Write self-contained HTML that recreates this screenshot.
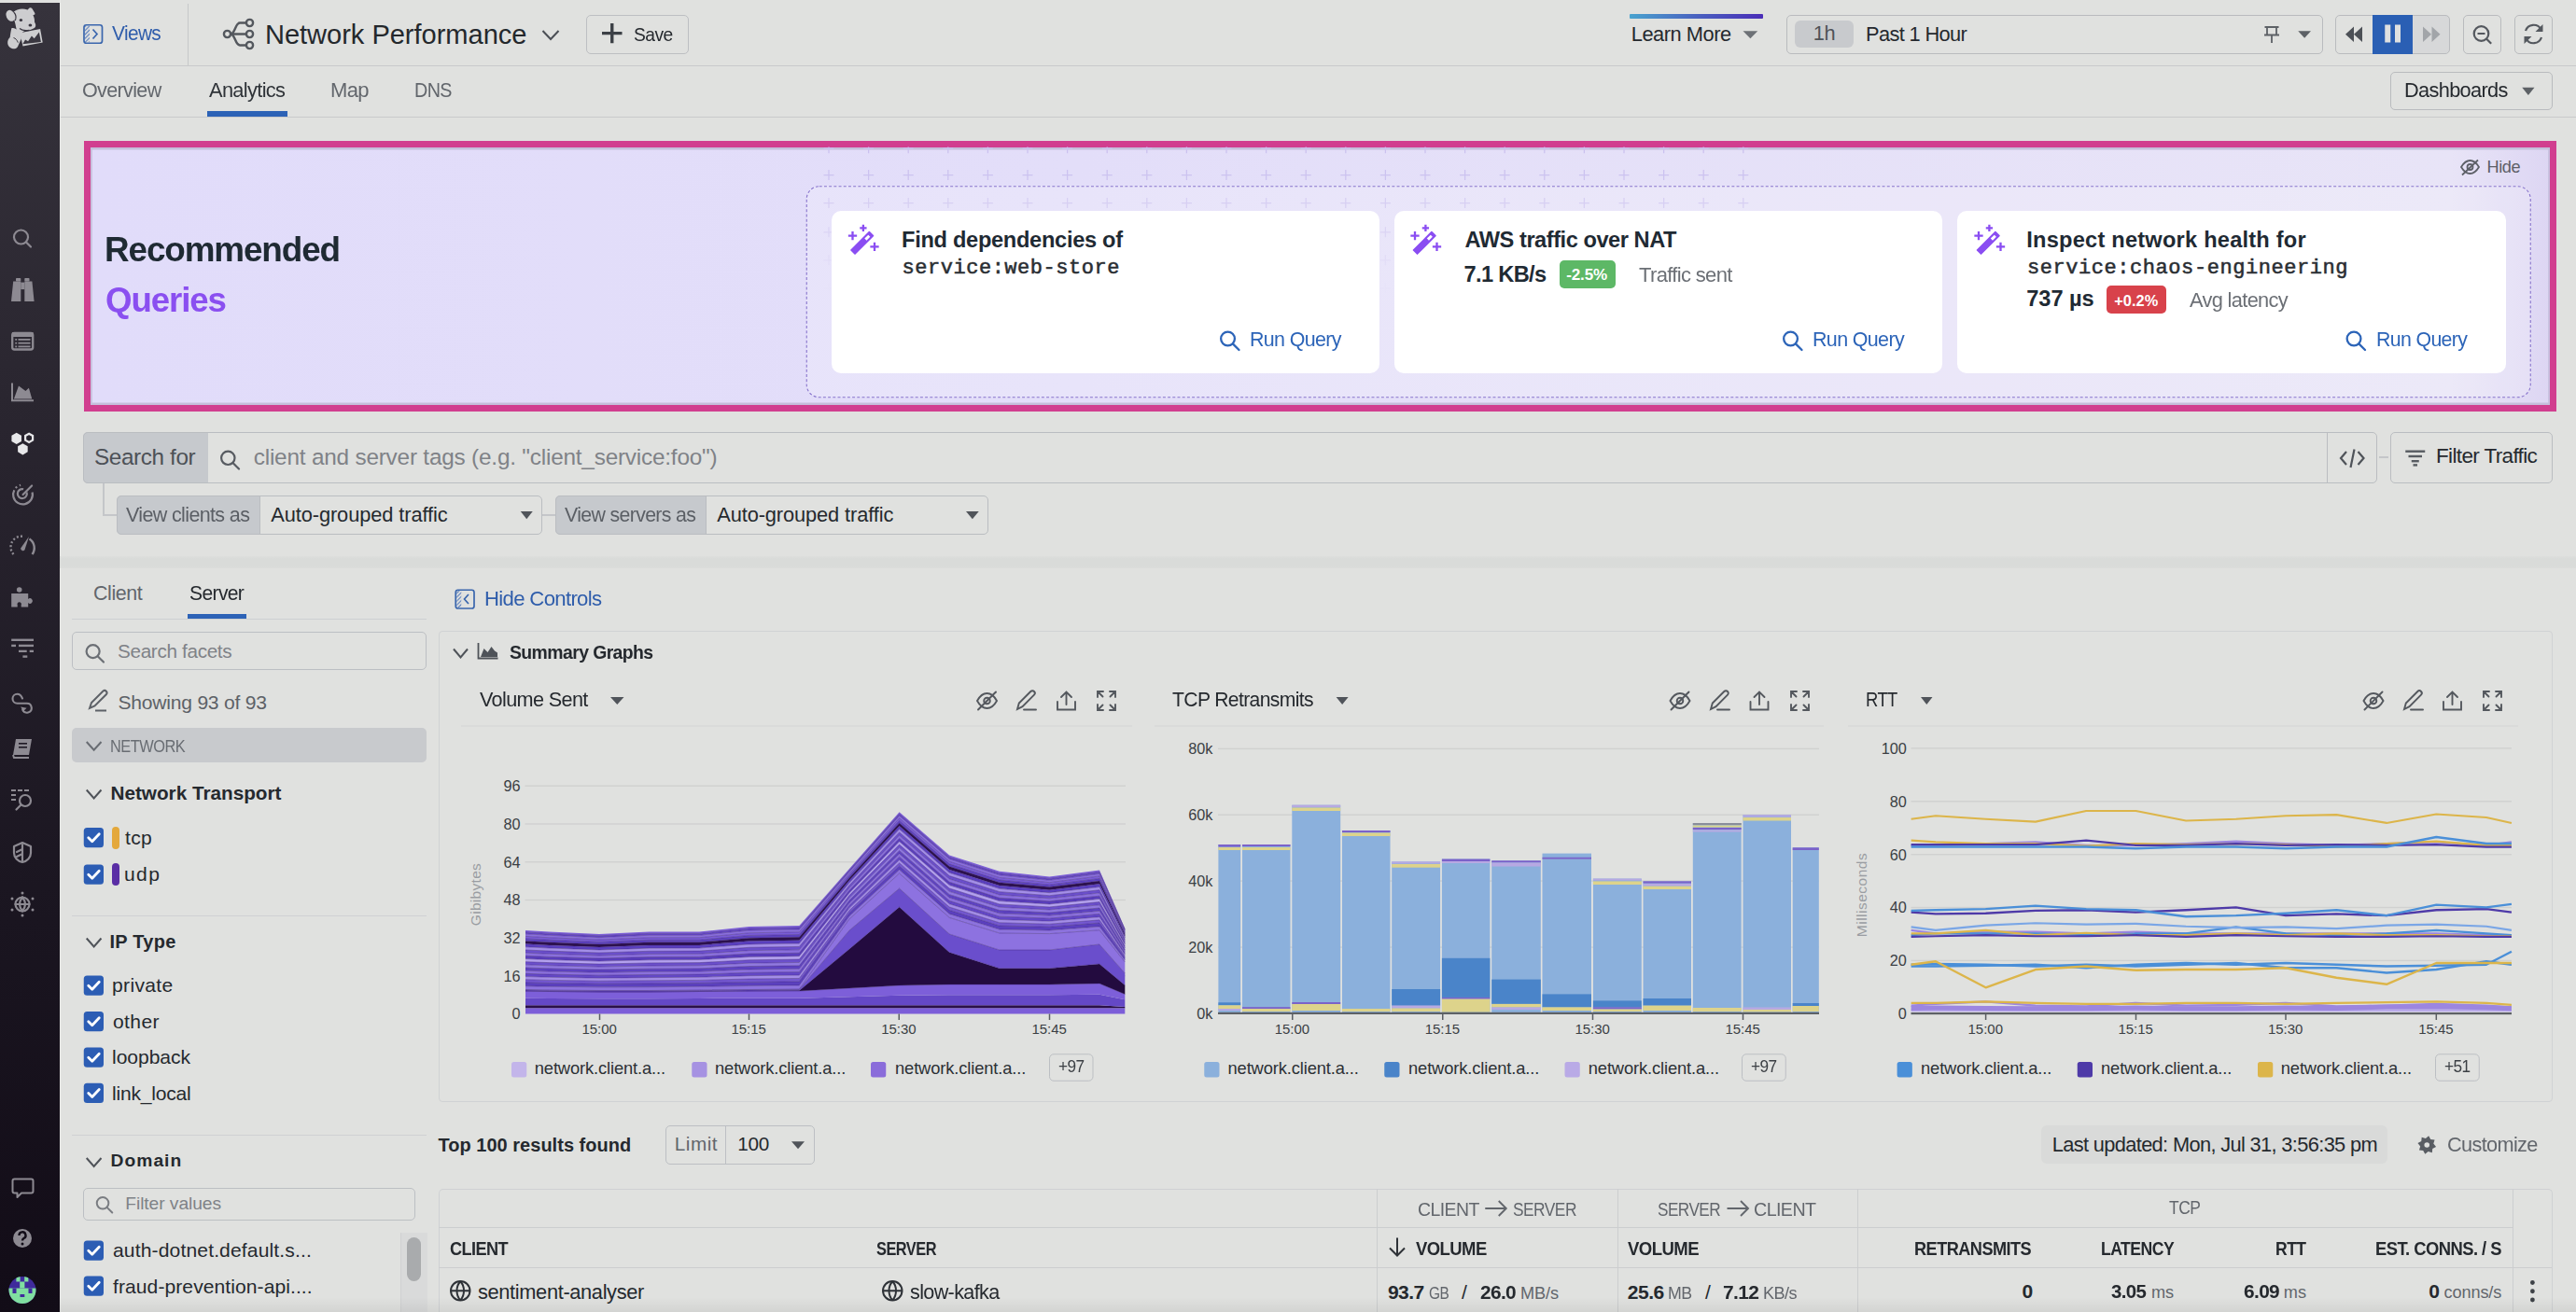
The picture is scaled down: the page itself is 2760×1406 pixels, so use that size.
<!DOCTYPE html><html><head><meta charset="utf-8"><style>
html,body{margin:0;padding:0}body{width:2760px;height:1406px;position:relative;overflow:hidden;background:#e0e1df;font-family:"Liberation Sans",sans-serif}
.t{position:absolute;white-space:pre}svg{position:absolute;overflow:visible}
</style></head><body>
<div style="position:absolute;left:0.00px;top:3.00px;width:64.00px;height:1403.00px;background:linear-gradient(#36333c,#2a2630 30%,#1a1520 70%,#120c17)"></div>
<div style="position:absolute;left:64.00px;top:0.00px;width:1.00px;height:1406.00px;background:#e9eae8"></div>
<svg style="left:0;top:0" width="64" height="1406" viewBox="0 0 64 1406"><g fill="#cdcdcf"><ellipse cx="11.3" cy="16.8" rx="4.6" ry="6.2" transform="rotate(-25 11.3 16.8)"/><path d="M14.5 13c3-3.5 10-4.5 15-2.5l1.8-1.8c1-.8 2.2-.6 3 .3l3 5c.5 1-.2 2-1.2 2l-.7.2c1.2 2.2 1.8 5 1.6 7.3l.9 2c.8 1.8.2 3.8-1.5 4.8-2 1.2-4.5 2-7 2.2-2 .2-3.5.5-4.5 1.5l-3 2.5c-1.5.5-3 0-3.5-1.5-.8-3.5-1.6-8-2.8-12.5-.6-3.2-.5-6.5-.1-9.5z"/><path d="M12.5 30c3 0 8 2 9.5 5l1 6-4 9c-1 1.8-3 2.5-5 2.2-3-.5-5.5-2.8-5.8-6-.2-2.5.8-4.6 2.5-6.2.5-3.2.8-6.5 1.8-10z"/><path d="M21.3 35.2l21.8-4.3 2.6 14.6-21.2 4.1z"/></g><path d="M24.3 47.2l2.8-4.8 3 1.8 3.8-5.6 2.8 2.6 5.2-6.6 2 10.4z" fill="#3a3740"/><path d="M15.2 13.5c1.8 2 2.2 5.5 1.2 8.5" fill="none" stroke="#3a3740" stroke-width="1.2"/><path d="M21 30.5c2.5 2.2 6.5 2.6 10.5 1.8" fill="none" stroke="#3a3740" stroke-width="1.2"/><path d="M14.5 40.5c2 .5 4 2.5 4.8 5.2" fill="none" stroke="#3a3740" stroke-width="1"/><ellipse cx="22.4" cy="21.4" rx="1.7" ry="1.5" fill="#3a3740"/><ellipse cx="32.4" cy="27" rx="1.9" ry="1.5" fill="#3a3740"/><g fill="none" stroke="#8d8a92" stroke-width="2.2" stroke-linecap="round" stroke-linejoin="round"><circle cx="22.5" cy="254" r="7.5"/><path d="M28 259.5l5 5"/></g><g fill="#8d8a92"><rect x="17" y="298" width="5.3" height="3.6" rx="0.8"/><rect x="26.3" y="298" width="5.2" height="3.6" rx="0.8"/><path d="M14.2 301.4h8.1v21.6h-10.3z"/><path d="M26.3 301.4h8.1l2.2 21.6h-10.3z"/><rect x="22.3" y="302.6" width="4" height="7.5"/></g><rect x="13.2" y="356.9" width="22" height="17.6" rx="2.2" fill="none" stroke="#8d8a92" stroke-width="2.3"/><g fill="#8d8a92"><rect x="13" y="356" width="22.5" height="5"/><rect x="16.3" y="363" width="1.8" height="1.8"/><rect x="19.5" y="363" width="13" height="1.8"/><rect x="16.3" y="366.8" width="1.8" height="1.8"/><rect x="19.5" y="366.8" width="13" height="1.8"/><rect x="16.3" y="370.5" width="1.8" height="1.8"/><rect x="19.5" y="370.5" width="13" height="1.8"/></g><path d="M14.9 427.5L20 413.4l7.4 5.7 3.5-3.4 3.4 11.8z" fill="#8d8a92"/><path d="M13 410.6v18.6h23" fill="none" stroke="#8d8a92" stroke-width="2"/><polygon points="22.98,472.95 17.70,476.00 12.42,472.95 12.42,466.85 17.70,463.80 22.98,466.85" fill="#e8e8ea"/><polygon points="35.08,471.60 31.10,473.90 27.12,471.60 27.12,467.00 31.10,464.70 35.08,467.00" fill="none" stroke="#e8e8ea" stroke-width="2.2"/><polygon points="29.68,484.35 24.40,487.40 19.12,484.35 19.12,478.25 24.40,475.20 29.68,478.25" fill="#e8e8ea"/><g fill="none" stroke="#8d8a92" stroke-width="2.2"><path d="M34.6 527.5a10.4 10.4 0 1 1-12.5-7.6" stroke-dasharray="40 2.5 2 3 2 3"/><path d="M28.6 527.5a5 5 0 1 1-3.5-3.3"/><path d="M24.6 530l9.5-9.5" stroke-linecap="round"/></g><g fill="none" stroke="#8d8a92" stroke-width="2.4"><path d="M14.5 594a11.5 11.5 0 0 1 9.5-19.2" stroke-dasharray="2 2.2"/><path d="M31.5 577.5a11.5 11.5 0 0 1 3 16.5"/></g><path d="M22.2 587.5l8.8-12.6-4.5 14.3a2.4 2.4 0 0 1-4.3-1.7z" fill="#8d8a92"/><path fill="#8d8a92" fill-rule="evenodd" d="M12.2 635.9h18v6a2.8 2.8 0 1 1 0 4.2v4.4h-7.5v-2.2a2.2 2.2 0 1 0-4 0v2.2h-6.5z"/><circle cx="20.7" cy="632" r="2.8" fill="#8d8a92"/><g fill="#8d8a92"><rect x="12.2" y="684.6" width="23.8" height="2.4"/><rect x="12.2" y="690.7" width="4.8" height="2.4"/><rect x="20" y="690.7" width="16" height="2.4"/><rect x="20" y="696.7" width="8.7" height="2.3"/><rect x="31.7" y="696.7" width="4.3" height="2.3"/><rect x="24.4" y="702.4" width="4.9" height="2.4"/></g><g fill="none" stroke="#8d8a92" stroke-width="2.1" stroke-linecap="round"><path d="M24 748.5c-1-2.5-3-4.8-5.5-4.8a5 5 0 0 0 0 10h10.3a5 5 0 1 1-4.6 7"/></g><path d="M22.2 757.5l2.6 4.8 3.8-3.5z" fill="#8d8a92"/><g fill="#8d8a92"><path d="M17 792h17l-3 17h-17z"/></g><path d="M14 809l1 3h16" fill="none" stroke="#8d8a92" stroke-width="2"/><g fill="#1e1a24"><rect x="20" y="796" width="9" height="1.6"/><rect x="20" y="800" width="9" height="1.6"/></g><g fill="#8d8a92"><rect x="12" y="846" width="5" height="2"/><rect x="19" y="846" width="5" height="2"/><rect x="26" y="846" width="5" height="2"/><rect x="12" y="851" width="5" height="2"/><rect x="12" y="856" width="5" height="2"/></g><g fill="none" stroke="#8d8a92" stroke-width="2.2" stroke-linecap="round" stroke-linejoin="round"><circle cx="27" cy="858" r="6"/><path d="M22.5 862.5l-5 5"/></g><g fill="none" stroke="#8d8a92" stroke-width="2.2" stroke-linecap="round" stroke-linejoin="round"><path d="M24 903l9 4v7c0 5-4 9-9 10-5-1-9-5-9-10v-7z"/><path d="M24 905v18M24 910l-6 3M24 915l-6 3"/></g><g fill="none" stroke="#8d8a92" stroke-width="2.2" stroke-linecap="round" stroke-linejoin="round" stroke-width="1.8"><circle cx="24" cy="969" r="7.5"/><path d="M16.5 969h15M24 961.5c-4 5-4 10 0 15M24 961.5c4 5 4 10 0 15"/></g><g fill="#8d8a92"><circle cx="24" cy="957" r="1.5"/><circle cx="24" cy="981" r="1.5"/><circle cx="13" cy="963" r="1.5"/><circle cx="35" cy="963" r="1.5"/><circle cx="13" cy="975" r="1.5"/><circle cx="35" cy="975" r="1.5"/></g><path d="M15.5 1263.5h18a2 2 0 0 1 2 2v11a2 2 0 0 1-2 2h-10.5l-4.5 4.5v-4.5h-3a2 2 0 0 1-2-2v-11a2 2 0 0 1 2-2z" fill="none" stroke="#8d8a92" stroke-width="2" stroke-linejoin="round"/><circle cx="24" cy="1327" r="10" fill="#8d8a92"/><path d="M20.5 1324a3.5 3.5 0 1 1 5 3c-1 .6-1.5 1.2-1.5 2.5" fill="none" stroke="#120d18" stroke-width="2.4"/><circle cx="24" cy="1333" r="1.5" fill="#120d18"/><circle cx="24" cy="1382.5" r="14.5" fill="#3f2b9c"/><clipPath id="av"><circle cx="24" cy="1382.5" r="14.5"/></clipPath><g clip-path="url(#av)" fill="#80dfa0"><rect x="17.4" y="1368" width="4.2" height="5.5"/><rect x="26.2" y="1368" width="4.2" height="5.5"/><rect x="21.2" y="1373.5" width="5.2" height="7"/><rect x="9" y="1380.5" width="30" height="18"/></g><rect x="13.5" y="1380.5" width="4" height="5.5" fill="#3f2b9c"/><rect x="30.5" y="1380.5" width="4" height="5.5" fill="#3f2b9c"/><rect x="21.5" y="1387" width="4.8" height="3" fill="#3f2b9c"/></svg>
<div style="position:absolute;left:65.00px;top:70.00px;width:2695.00px;height:1.00px;background:#c9cacb"></div>
<div style="position:absolute;left:200.75px;top:4.00px;width:1.50px;height:66.00px;background:#c6c8c9"></div>
<div style="position:absolute;left:65.00px;top:125.00px;width:2695.00px;height:1.00px;background:#c9cacb"></div>
<div style="position:absolute;left:222.00px;top:119.00px;width:85.75px;height:5.50px;background:#2c62b6"></div>
<div style="position:absolute;left:627.75px;top:15.50px;width:110.25px;height:42.00px;border:1px solid #bdbfc2;border-radius:5px;box-sizing:border-box"></div>
<div style="position:absolute;left:1746.25px;top:15.00px;width:143.00px;height:4.50px;background:linear-gradient(90deg,#49a3cf,#4a62c0 50%,#4a2db8);border-radius:1px"></div>
<div style="position:absolute;left:1914.25px;top:15.50px;width:574.25px;height:42.00px;border:1px solid #b9bbbe;border-radius:5px;box-sizing:border-box"></div>
<div style="position:absolute;left:1922.50px;top:21.75px;width:63.00px;height:29.00px;background:#c8cacd;border-radius:6px"></div>
<div style="position:absolute;left:2584.75px;top:16.00px;width:40.50px;height:41.00px;background:#d7d8d9;border-radius:0 5px 5px 0"></div>
<div style="position:absolute;left:2501.50px;top:15.50px;width:123.75px;height:42.00px;border:1px solid #b9bbbe;border-radius:5px;box-sizing:border-box"></div>
<div style="position:absolute;left:2542.25px;top:15.50px;width:42.50px;height:42.00px;background:#2a5fb4"></div>
<div style="position:absolute;left:2638.50px;top:15.50px;width:41.75px;height:42.00px;border:1px solid #b9bbbe;border-radius:5px;box-sizing:border-box"></div>
<div style="position:absolute;left:2693.50px;top:15.50px;width:41.25px;height:42.00px;border:1px solid #b9bbbe;border-radius:5px;box-sizing:border-box"></div>
<div style="position:absolute;left:2560.50px;top:76.75px;width:174.25px;height:41.50px;border:1px solid #b9bbbe;border-radius:5px;box-sizing:border-box"></div>
<svg style="left:0;top:0" width="2760" height="1406" viewBox="0 0 2760 1406"><rect x="90" y="26.75" width="19.5" height="19.5" rx="2.5" fill="none" stroke="#3a66ad" stroke-width="1.7"/><defs><pattern id="hatch" width="3" height="3" patternUnits="userSpaceOnUse" patternTransform="rotate(45)"><rect width="1.1" height="3" fill="#5b7fbd"/></pattern></defs><rect x="91" y="27.75" width="5" height="17.5" fill="url(#hatch)"/><path d="M99.5 31.5l4.5 5-4.5 5" fill="none" stroke="#3a66ad" stroke-width="1.7"/><g fill="none" stroke="#54585e" stroke-width="2.4"><circle cx="243.5" cy="36.5" r="3.6"/><circle cx="267.5" cy="24.5" r="3.6"/><circle cx="267.5" cy="36.5" r="3.6"/><circle cx="267.5" cy="48.5" r="3.6"/><path d="M247 36.5h17M247 36.5c5 0 5-12 10-12h7M247 36.5c5 0 5 12 10 12h7"/></g><path d="M581.5 33l8.5 9 8.5-9" fill="none" stroke="#4b4f55" stroke-width="2"/><path d="M655.75 25v21.25M645 35.6h21.5" stroke="#3c4046" stroke-width="3.4"/><path d="M1867.5 33.25H1883.25L1875.375 41.25z" fill="#6d7176"/><g fill="none" stroke="#5d6166" stroke-width="1.8"><path d="M2426.5 29h15M2429 29v8M2439 29v8M2426 37.5h16M2434 37.5v8.5"/></g><path d="M2462.25 33.25H2476L2469.125 40.75z" fill="#5d6166"/><path d="M2522 28.5v16.5l-9-8.25zM2531 28.5v16.5l-9-8.25z" fill="#4c5056"/><rect x="2555.25" y="26.5" width="6" height="19" fill="#dfe0e0"/><rect x="2566" y="26.5" width="6" height="19" fill="#dfe0e0"/><path d="M2596 28.5v16.5l9-8.25zM2605.5 28.5v16.5l9-8.25z" fill="#a2a5a9"/><g fill="none" stroke="#54585e" stroke-width="2.2"><circle cx="2658.5" cy="36" r="7.8"/><path d="M2664.2 41.8l5 5M2654.5 36h8"/></g><g fill="none" stroke="#54585e" stroke-width="2.2"><path d="M2706 33a9 9 0 0 1 16.5-1.5"/><path d="M2723 40a9 9 0 0 1-16.5 1.5"/></g><path d="M2724.5 26v8h-8z" fill="#54585e"/><path d="M2704.5 47v-8h8z" fill="#54585e"/><path d="M2702.25 93.75H2715.5L2708.875 102z" fill="#5d6166"/></svg>
<div style="position:absolute;left:89.75px;top:150.75px;width:2648.75px;height:290.00px;background:#d13e8f"></div>
<div style="position:absolute;left:96.50px;top:157.50px;width:2635.50px;height:276.50px;background:linear-gradient(90deg,#e1dcfa 0%,#e3def9 40%,#e8e4f7 96%,#ddd6f3 100%);box-shadow:inset 0 2.5px 0 #c5bedb,inset 0 -2.5px 0 #c5bedb,inset 2px 0 0 #c9c2e0,inset -2px 0 0 #c9c2e0"></div>
<svg style="left:0;top:0" width="2760" height="1406" viewBox="0 0 2760 1406"><defs><linearGradient id="pgv" x1="0" x2="0" y1="0" y2="1"><stop offset="0" stop-color="#fff"/><stop offset="0.45" stop-color="#fff" stop-opacity="0.9"/><stop offset="0.85" stop-color="#fff" stop-opacity="0.15"/><stop offset="1" stop-color="#fff" stop-opacity="0"/></linearGradient><mask id="pgm"><rect x="840" y="157.5" width="1060" height="160" fill="url(#pgv)"/></mask></defs><g mask="url(#pgm)" stroke="#cbc1ef" stroke-width="1.25"><path d="M882.5 158.75h11M888.0 153.25v11"/><path d="M882.5 187.5h11M888.0 182.0v11"/><path d="M882.5 217.5h11M888.0 212.0v11"/><path d="M882.5 248.75h11M888.0 243.25v11"/><path d="M882.5 278.75h11M888.0 273.25v11"/><path d="M882.5 308.75h11M888.0 303.25v11"/><path d="M925.1 158.75h11M930.6 153.25v11"/><path d="M925.1 187.5h11M930.6 182.0v11"/><path d="M925.1 217.5h11M930.6 212.0v11"/><path d="M925.1 248.75h11M930.6 243.25v11"/><path d="M925.1 278.75h11M930.6 273.25v11"/><path d="M925.1 308.75h11M930.6 303.25v11"/><path d="M967.7 158.75h11M973.2 153.25v11"/><path d="M967.7 187.5h11M973.2 182.0v11"/><path d="M967.7 217.5h11M973.2 212.0v11"/><path d="M967.7 248.75h11M973.2 243.25v11"/><path d="M967.7 278.75h11M973.2 273.25v11"/><path d="M967.7 308.75h11M973.2 303.25v11"/><path d="M1010.3 158.75h11M1015.8 153.25v11"/><path d="M1010.3 187.5h11M1015.8 182.0v11"/><path d="M1010.3 217.5h11M1015.8 212.0v11"/><path d="M1010.3 248.75h11M1015.8 243.25v11"/><path d="M1010.3 278.75h11M1015.8 273.25v11"/><path d="M1010.3 308.75h11M1015.8 303.25v11"/><path d="M1052.9 158.75h11M1058.4 153.25v11"/><path d="M1052.9 187.5h11M1058.4 182.0v11"/><path d="M1052.9 217.5h11M1058.4 212.0v11"/><path d="M1052.9 248.75h11M1058.4 243.25v11"/><path d="M1052.9 278.75h11M1058.4 273.25v11"/><path d="M1052.9 308.75h11M1058.4 303.25v11"/><path d="M1095.5 158.75h11M1101.0 153.25v11"/><path d="M1095.5 187.5h11M1101.0 182.0v11"/><path d="M1095.5 217.5h11M1101.0 212.0v11"/><path d="M1095.5 248.75h11M1101.0 243.25v11"/><path d="M1095.5 278.75h11M1101.0 273.25v11"/><path d="M1095.5 308.75h11M1101.0 303.25v11"/><path d="M1138.1 158.75h11M1143.6 153.25v11"/><path d="M1138.1 187.5h11M1143.6 182.0v11"/><path d="M1138.1 217.5h11M1143.6 212.0v11"/><path d="M1138.1 248.75h11M1143.6 243.25v11"/><path d="M1138.1 278.75h11M1143.6 273.25v11"/><path d="M1138.1 308.75h11M1143.6 303.25v11"/><path d="M1180.7 158.75h11M1186.2 153.25v11"/><path d="M1180.7 187.5h11M1186.2 182.0v11"/><path d="M1180.7 217.5h11M1186.2 212.0v11"/><path d="M1180.7 248.75h11M1186.2 243.25v11"/><path d="M1180.7 278.75h11M1186.2 273.25v11"/><path d="M1180.7 308.75h11M1186.2 303.25v11"/><path d="M1223.3 158.75h11M1228.8 153.25v11"/><path d="M1223.3 187.5h11M1228.8 182.0v11"/><path d="M1223.3 217.5h11M1228.8 212.0v11"/><path d="M1223.3 248.75h11M1228.8 243.25v11"/><path d="M1223.3 278.75h11M1228.8 273.25v11"/><path d="M1223.3 308.75h11M1228.8 303.25v11"/><path d="M1265.9 158.75h11M1271.4 153.25v11"/><path d="M1265.9 187.5h11M1271.4 182.0v11"/><path d="M1265.9 217.5h11M1271.4 212.0v11"/><path d="M1265.9 248.75h11M1271.4 243.25v11"/><path d="M1265.9 278.75h11M1271.4 273.25v11"/><path d="M1265.9 308.75h11M1271.4 303.25v11"/><path d="M1308.5 158.75h11M1314.0 153.25v11"/><path d="M1308.5 187.5h11M1314.0 182.0v11"/><path d="M1308.5 217.5h11M1314.0 212.0v11"/><path d="M1308.5 248.75h11M1314.0 243.25v11"/><path d="M1308.5 278.75h11M1314.0 273.25v11"/><path d="M1308.5 308.75h11M1314.0 303.25v11"/><path d="M1351.1 158.75h11M1356.6 153.25v11"/><path d="M1351.1 187.5h11M1356.6 182.0v11"/><path d="M1351.1 217.5h11M1356.6 212.0v11"/><path d="M1351.1 248.75h11M1356.6 243.25v11"/><path d="M1351.1 278.75h11M1356.6 273.25v11"/><path d="M1351.1 308.75h11M1356.6 303.25v11"/><path d="M1393.7 158.75h11M1399.2 153.25v11"/><path d="M1393.7 187.5h11M1399.2 182.0v11"/><path d="M1393.7 217.5h11M1399.2 212.0v11"/><path d="M1393.7 248.75h11M1399.2 243.25v11"/><path d="M1393.7 278.75h11M1399.2 273.25v11"/><path d="M1393.7 308.75h11M1399.2 303.25v11"/><path d="M1436.3 158.75h11M1441.8 153.25v11"/><path d="M1436.3 187.5h11M1441.8 182.0v11"/><path d="M1436.3 217.5h11M1441.8 212.0v11"/><path d="M1436.3 248.75h11M1441.8 243.25v11"/><path d="M1436.3 278.75h11M1441.8 273.25v11"/><path d="M1436.3 308.75h11M1441.8 303.25v11"/><path d="M1478.9 158.75h11M1484.4 153.25v11"/><path d="M1478.9 187.5h11M1484.4 182.0v11"/><path d="M1478.9 217.5h11M1484.4 212.0v11"/><path d="M1478.9 248.75h11M1484.4 243.25v11"/><path d="M1478.9 278.75h11M1484.4 273.25v11"/><path d="M1478.9 308.75h11M1484.4 303.25v11"/><path d="M1521.5 158.75h11M1527.0 153.25v11"/><path d="M1521.5 187.5h11M1527.0 182.0v11"/><path d="M1521.5 217.5h11M1527.0 212.0v11"/><path d="M1521.5 248.75h11M1527.0 243.25v11"/><path d="M1521.5 278.75h11M1527.0 273.25v11"/><path d="M1521.5 308.75h11M1527.0 303.25v11"/><path d="M1564.1 158.75h11M1569.6 153.25v11"/><path d="M1564.1 187.5h11M1569.6 182.0v11"/><path d="M1564.1 217.5h11M1569.6 212.0v11"/><path d="M1564.1 248.75h11M1569.6 243.25v11"/><path d="M1564.1 278.75h11M1569.6 273.25v11"/><path d="M1564.1 308.75h11M1569.6 303.25v11"/><path d="M1606.7 158.75h11M1612.2 153.25v11"/><path d="M1606.7 187.5h11M1612.2 182.0v11"/><path d="M1606.7 217.5h11M1612.2 212.0v11"/><path d="M1606.7 248.75h11M1612.2 243.25v11"/><path d="M1606.7 278.75h11M1612.2 273.25v11"/><path d="M1606.7 308.75h11M1612.2 303.25v11"/><path d="M1649.3 158.75h11M1654.8 153.25v11"/><path d="M1649.3 187.5h11M1654.8 182.0v11"/><path d="M1649.3 217.5h11M1654.8 212.0v11"/><path d="M1649.3 248.75h11M1654.8 243.25v11"/><path d="M1649.3 278.75h11M1654.8 273.25v11"/><path d="M1649.3 308.75h11M1654.8 303.25v11"/><path d="M1691.9 158.75h11M1697.4 153.25v11"/><path d="M1691.9 187.5h11M1697.4 182.0v11"/><path d="M1691.9 217.5h11M1697.4 212.0v11"/><path d="M1691.9 248.75h11M1697.4 243.25v11"/><path d="M1691.9 278.75h11M1697.4 273.25v11"/><path d="M1691.9 308.75h11M1697.4 303.25v11"/><path d="M1734.5 158.75h11M1740.0 153.25v11"/><path d="M1734.5 187.5h11M1740.0 182.0v11"/><path d="M1734.5 217.5h11M1740.0 212.0v11"/><path d="M1734.5 248.75h11M1740.0 243.25v11"/><path d="M1734.5 278.75h11M1740.0 273.25v11"/><path d="M1734.5 308.75h11M1740.0 303.25v11"/><path d="M1777.1 158.75h11M1782.6 153.25v11"/><path d="M1777.1 187.5h11M1782.6 182.0v11"/><path d="M1777.1 217.5h11M1782.6 212.0v11"/><path d="M1777.1 248.75h11M1782.6 243.25v11"/><path d="M1777.1 278.75h11M1782.6 273.25v11"/><path d="M1777.1 308.75h11M1782.6 303.25v11"/><path d="M1819.7 158.75h11M1825.2 153.25v11"/><path d="M1819.7 187.5h11M1825.2 182.0v11"/><path d="M1819.7 217.5h11M1825.2 212.0v11"/><path d="M1819.7 248.75h11M1825.2 243.25v11"/><path d="M1819.7 278.75h11M1825.2 273.25v11"/><path d="M1819.7 308.75h11M1825.2 303.25v11"/><path d="M1862.3 158.75h11M1867.8 153.25v11"/><path d="M1862.3 187.5h11M1867.8 182.0v11"/><path d="M1862.3 217.5h11M1867.8 212.0v11"/><path d="M1862.3 248.75h11M1867.8 243.25v11"/><path d="M1862.3 278.75h11M1867.8 273.25v11"/><path d="M1862.3 308.75h11M1867.8 303.25v11"/></g></svg>
<div style="position:absolute;left:863.75px;top:199.25px;width:1848.00px;height:227.00px;border-radius:14px;background:rgba(255,255,255,0.2)"></div>
<svg style="left:0;top:0" width="2760" height="1406"><rect x="864.25" y="199.75" width="1847" height="226" rx="13.5" fill="none" stroke="#8773cc" stroke-width="1.1" stroke-dasharray="3 2.2"/></svg>
<div style="position:absolute;left:890.75px;top:226.25px;width:587.25px;height:173.75px;background:#fff;border-radius:10px"></div>
<div style="position:absolute;left:1493.75px;top:226.25px;width:587.50px;height:173.75px;background:#fff;border-radius:10px"></div>
<div style="position:absolute;left:2097.00px;top:226.25px;width:587.75px;height:173.75px;background:#fff;border-radius:10px"></div>
<div style="position:absolute;left:1670.50px;top:279.25px;width:60.25px;height:30.00px;background:#5db866;border-radius:5px"></div>
<div style="position:absolute;left:2256.50px;top:306.25px;width:64.50px;height:29.50px;background:#d8424b;border-radius:5px"></div>
<svg style="left:0;top:0" width="2760" height="1406" viewBox="0 0 2760 1406"><g transform="translate(909,241.25)"><g transform="translate(14.7,19.1) rotate(-45)"><rect x="-14.5" y="-3.65" width="29" height="7.3" rx="0.8" fill="#8a4df2"/><rect x="5.2" y="-1.5" width="5.6" height="3" fill="#fff"/></g><path d="M4.5 6.8v9.3M-0.15 11.45h9.3M15.9 -0.5v7.3M12.25 3.15h7.3M28 18.5v9.3M23.35 23.15h9.3" stroke="#8a4df2" stroke-width="2.3"/></g><g transform="translate(1511.5,241.25)"><g transform="translate(14.7,19.1) rotate(-45)"><rect x="-14.5" y="-3.65" width="29" height="7.3" rx="0.8" fill="#8a4df2"/><rect x="5.2" y="-1.5" width="5.6" height="3" fill="#fff"/></g><path d="M4.5 6.8v9.3M-0.15 11.45h9.3M15.9 -0.5v7.3M12.25 3.15h7.3M28 18.5v9.3M23.35 23.15h9.3" stroke="#8a4df2" stroke-width="2.3"/></g><g transform="translate(2115.5,241.25)"><g transform="translate(14.7,19.1) rotate(-45)"><rect x="-14.5" y="-3.65" width="29" height="7.3" rx="0.8" fill="#8a4df2"/><rect x="5.2" y="-1.5" width="5.6" height="3" fill="#fff"/></g><path d="M4.5 6.8v9.3M-0.15 11.45h9.3M15.9 -0.5v7.3M12.25 3.15h7.3M28 18.5v9.3M23.35 23.15h9.3" stroke="#8a4df2" stroke-width="2.3"/></g><g fill="none" stroke="#2c64b8" stroke-width="2.3"><circle cx="1315.53" cy="363.03" r="7.38"/><path d="M1320.84 368.34L1327.50 375.00" stroke-linecap="round"/></g><g fill="none" stroke="#2c64b8" stroke-width="2.3"><circle cx="1918.53" cy="363.03" r="7.38"/><path d="M1923.84 368.34L1930.50 375.00" stroke-linecap="round"/></g><g fill="none" stroke="#2c64b8" stroke-width="2.3"><circle cx="2522.03" cy="363.03" r="7.38"/><path d="M2527.34 368.34L2534.00 375.00" stroke-linecap="round"/></g><g fill="none" stroke="#5d6067" stroke-width="1.8"><path d="M2637 179c3-5 6.5-7 9.5-7s6.5 2 9.5 7c-3 5-6.5 7-9.5 7s-6.5-2-9.5-7z"/><circle cx="2646.5" cy="179" r="3"/><path d="M2638 187.5l17-16"/></g></svg>
<div style="position:absolute;left:89.00px;top:463.00px;width:133.75px;height:54.50px;background:#c6c9cd;border-radius:5px 0 0 5px"></div>
<div style="position:absolute;left:89.00px;top:463.00px;width:2458.25px;height:54.50px;border:1px solid #babdc1;border-radius:5px;box-sizing:border-box"></div>
<div style="position:absolute;left:2493.00px;top:463.00px;width:1.00px;height:54.50px;background:#babdc1"></div>
<div style="position:absolute;left:2549.25px;top:488.50px;width:9.75px;height:2.00px;background:#c4c6c9"></div>
<div style="position:absolute;left:2560.50px;top:463.00px;width:174.25px;height:54.50px;border:1px solid #babdc1;border-radius:5px;box-sizing:border-box"></div>
<div style="position:absolute;left:109.50px;top:517.50px;width:2.00px;height:35.50px;background:#c4c6c9"></div>
<div style="position:absolute;left:109.50px;top:551.00px;width:15.75px;height:2.00px;background:#c4c6c9"></div>
<div style="position:absolute;left:581.00px;top:551.00px;width:14.00px;height:2.00px;background:#c4c6c9"></div>
<div style="position:absolute;left:125.25px;top:530.75px;width:152.50px;height:42.25px;background:#c6c9cd;border-radius:5px 0 0 5px"></div>
<div style="position:absolute;left:125.25px;top:530.75px;width:455.75px;height:42.25px;border:1px solid #babdc1;border-radius:5px;box-sizing:border-box"></div>
<div style="position:absolute;left:277.75px;top:530.75px;width:1.00px;height:42.25px;background:#babdc1"></div>
<div style="position:absolute;left:595.00px;top:530.75px;width:160.50px;height:42.25px;background:#c6c9cd;border-radius:5px 0 0 5px"></div>
<div style="position:absolute;left:595.00px;top:530.75px;width:464.25px;height:42.25px;border:1px solid #babdc1;border-radius:5px;box-sizing:border-box"></div>
<div style="position:absolute;left:755.50px;top:530.75px;width:1.00px;height:42.25px;background:#babdc1"></div>
<svg style="left:0;top:0" width="2760" height="1406" viewBox="0 0 2760 1406"><g fill="none" stroke="#575b61" stroke-width="2.2"><circle cx="244.30" cy="490.80" r="7.20"/><path d="M249.48 495.98L256.00 502.50" stroke-linecap="round"/></g><g fill="none" stroke="#4f5359" stroke-width="2.2"><path d="M2514 484l-6 7 6 7M2526.5 484l6 7-6 7M2522.5 481.5l-4 19.5"/></g><g fill="#575b61"><rect x="2577.25" y="482.5" width="21" height="2.4"/><rect x="2580.5" y="487.8" width="14.5" height="2.4"/><rect x="2583.75" y="493" width="8" height="2.4"/><rect x="2585.5" y="497.2" width="4.5" height="2.4"/></g><path d="M557.75 548H570.75L564.25 556.25z" fill="#50545a"/><path d="M1035 548H1048.75L1041.875 556.25z" fill="#50545a"/></svg>
<div style="position:absolute;left:64.00px;top:596.00px;width:2696.00px;height:13.00px;background:linear-gradient(#dedfdd,#d9dbd9 20%,#d9dbd9 85%,#dcdddb)"></div>
<div style="position:absolute;left:76.50px;top:663.25px;width:380.00px;height:1.00px;background:#cdd0d2"></div>
<div style="position:absolute;left:201.00px;top:658.00px;width:63.00px;height:5.25px;background:#2c62b6"></div>
<div style="position:absolute;left:76.50px;top:677.00px;width:380.00px;height:41.25px;border:1px solid #bcbfc3;border-radius:5px;box-sizing:border-box"></div>
<div style="position:absolute;left:76.50px;top:780.00px;width:380.00px;height:37.00px;background:#c8cacd;border-radius:5px"></div>
<div style="position:absolute;left:76.50px;top:980.75px;width:380.00px;height:1.00px;background:#cfd1d3"></div>
<div style="position:absolute;left:76.50px;top:1215.75px;width:380.00px;height:1.00px;background:#cfd1d3"></div>
<svg style="left:0;top:0" width="2760" height="1406" viewBox="0 0 2760 1406"><rect x="89.75" y="887" width="21.25" height="21.25" rx="3.5" fill="#2c5db4"/><path d="M94.75 897.8l4 4 7.5-8" fill="none" stroke="#fff" stroke-width="2.8" stroke-linecap="round" stroke-linejoin="round"/></svg>
<svg style="left:0;top:0" width="2760" height="1406" viewBox="0 0 2760 1406"><rect x="89.75" y="926.5" width="21.25" height="21.25" rx="3.5" fill="#2c5db4"/><path d="M94.75 937.3l4 4 7.5-8" fill="none" stroke="#fff" stroke-width="2.8" stroke-linecap="round" stroke-linejoin="round"/></svg>
<svg style="left:0;top:0" width="2760" height="1406" viewBox="0 0 2760 1406"><rect x="89.75" y="1045.5" width="21.25" height="21.25" rx="3.5" fill="#2c5db4"/><path d="M94.75 1056.3l4 4 7.5-8" fill="none" stroke="#fff" stroke-width="2.8" stroke-linecap="round" stroke-linejoin="round"/></svg>
<svg style="left:0;top:0" width="2760" height="1406" viewBox="0 0 2760 1406"><rect x="89.75" y="1084" width="21.25" height="21.25" rx="3.5" fill="#2c5db4"/><path d="M94.75 1094.8l4 4 7.5-8" fill="none" stroke="#fff" stroke-width="2.8" stroke-linecap="round" stroke-linejoin="round"/></svg>
<svg style="left:0;top:0" width="2760" height="1406" viewBox="0 0 2760 1406"><rect x="89.75" y="1122.5" width="21.25" height="21.25" rx="3.5" fill="#2c5db4"/><path d="M94.75 1133.3l4 4 7.5-8" fill="none" stroke="#fff" stroke-width="2.8" stroke-linecap="round" stroke-linejoin="round"/></svg>
<svg style="left:0;top:0" width="2760" height="1406" viewBox="0 0 2760 1406"><rect x="89.75" y="1160.75" width="21.25" height="21.25" rx="3.5" fill="#2c5db4"/><path d="M94.75 1171.55l4 4 7.5-8" fill="none" stroke="#fff" stroke-width="2.8" stroke-linecap="round" stroke-linejoin="round"/></svg>
<svg style="left:0;top:0" width="2760" height="1406" viewBox="0 0 2760 1406"><rect x="89.75" y="1329.5" width="21.25" height="21.25" rx="3.5" fill="#2c5db4"/><path d="M94.75 1340.3l4 4 7.5-8" fill="none" stroke="#fff" stroke-width="2.8" stroke-linecap="round" stroke-linejoin="round"/></svg>
<svg style="left:0;top:0" width="2760" height="1406" viewBox="0 0 2760 1406"><rect x="89.75" y="1367.5" width="21.25" height="21.25" rx="3.5" fill="#2c5db4"/><path d="M94.75 1378.3l4 4 7.5-8" fill="none" stroke="#fff" stroke-width="2.8" stroke-linecap="round" stroke-linejoin="round"/></svg>
<div style="position:absolute;left:119.50px;top:885.50px;width:8.25px;height:24.50px;background:#e4a83b;border-radius:4px"></div>
<div style="position:absolute;left:119.50px;top:924.50px;width:8.25px;height:24.50px;background:#5a2ea5;border-radius:4px"></div>
<div style="position:absolute;left:89.00px;top:1272.50px;width:355.50px;height:35.00px;border:1px solid #bcbfc3;border-radius:5px;box-sizing:border-box"></div>
<div style="position:absolute;left:429.00px;top:1320.75px;width:27.50px;height:85.25px;background:#d9dada;border-left:1px solid #d0d1d2"></div>
<div style="position:absolute;left:436.00px;top:1326.25px;width:15.00px;height:46.25px;background:#a9abad;border-radius:8px"></div>
<svg style="left:0;top:0" width="2760" height="1406" viewBox="0 0 2760 1406"><g fill="none" stroke="#6b6f75" stroke-width="2.2"><circle cx="99.62" cy="698.12" r="7.02"/><path d="M104.67 703.17L111.00 709.50" stroke-linecap="round"/></g><g fill="none" stroke="#5d6167" stroke-width="2"><path d="M96 759l2-6 12.5-12.5a2.5 2.5 0 0 1 3.5 3.5l-12.5 12.5z"/><path d="M102 761.5h12"/></g><path d="M92.75 795L100.625 803.75L108.5 795" fill="none" stroke="#696d73" stroke-width="2"/><path d="M92.75 846.5L100.625 855.5L108.5 846.5" fill="none" stroke="#4f5359" stroke-width="2"/><path d="M92.75 1005.5L100.625 1014.5L108.5 1005.5" fill="none" stroke="#4f5359" stroke-width="2"/><path d="M92.75 1241L100.625 1250L108.5 1241" fill="none" stroke="#4f5359" stroke-width="2"/><g fill="none" stroke="#7a7d82" stroke-width="2"><circle cx="110.05" cy="1289.30" r="6.30"/><path d="M114.59 1293.84L120.25 1299.50" stroke-linecap="round"/></g></svg>
<div style="position:absolute;left:469.50px;top:676.00px;width:2265.50px;height:505.00px;border:1px solid #d0d2d4;border-radius:4px;box-sizing:border-box"></div>
<svg style="left:0;top:0" width="2760" height="1406" viewBox="0 0 2760 1406"><rect x="488.25" y="632.25" width="19.75" height="19.75" rx="2.5" fill="none" stroke="#3a66ad" stroke-width="1.7"/><rect x="489.25" y="633.25" width="5" height="17.75" fill="url(#hatch)"/><path d="M502 637l-4.5 5 4.5 5" fill="none" stroke="#3a66ad" stroke-width="1.7"/><path d="M486 695.5L493.5 704.5L501 695.5" fill="none" stroke="#4f5359" stroke-width="2"/><path d="M512.5 689v16.5h21" fill="none" stroke="#4f5359" stroke-width="1.8"/><path d="M515 704l3.5-9 4 4 4-6 3.5 4.5 3 2v4.5z" fill="#4f5359"/><path d="M654 747H668.5L661.25 755z" fill="#50545a"/><path d="M1431.6 747H1444.6L1438.1 755z" fill="#50545a"/><path d="M2058 747H2070.5L2064.25 755z" fill="#50545a"/><g fill="none" stroke="#54585e" stroke-width="1.9" stroke-linecap="round"><path d="M1047 751c3-5.5 6.5-8 10.5-8s7.5 2.5 10.5 8c-3 5.5-6.5 8-10.5 8s-7.5-2.5-10.5-8z"/><circle cx="1057.5" cy="751" r="3.3"/><path d="M1048 760.5l19-19"/><path d="M1090 760l1.8-6.5 12.5-12.5a2.6 2.6 0 0 1 3.7 3.7l-12.5 12.5z"/><path d="M1097 760.5h13"/><path d="M1142.5 755v-13M1137 747l5.5-5.5 5.5 5.5M1133 752v8.5h19v-8.5"/><path d="M1176 747v-6h6M1176 741l5.5 5.5M1195 747v-6h-6M1195 741l-5.5 5.5M1176 755v6h6M1176 761l5.5-5.5M1195 755v6h-6M1195 761l-5.5-5.5"/></g><g fill="none" stroke="#54585e" stroke-width="1.9" stroke-linecap="round"><path d="M1789.5 751c3-5.5 6.5-8 10.5-8s7.5 2.5 10.5 8c-3 5.5-6.5 8-10.5 8s-7.5-2.5-10.5-8z"/><circle cx="1800.0" cy="751" r="3.3"/><path d="M1790.5 760.5l19-19"/><path d="M1833 760l1.8-6.5 12.5-12.5a2.6 2.6 0 0 1 3.7 3.7l-12.5 12.5z"/><path d="M1840 760.5h13"/><path d="M1885.0 755v-13M1879.5 747l5.5-5.5 5.5 5.5M1875.5 752v8.5h19v-8.5"/><path d="M1919 747v-6h6M1919 741l5.5 5.5M1938 747v-6h-6M1938 741l-5.5 5.5M1919 755v6h6M1919 761l5.5-5.5M1938 755v6h-6M1938 761l-5.5-5.5"/></g><g fill="none" stroke="#54585e" stroke-width="1.9" stroke-linecap="round"><path d="M2532.5 751c3-5.5 6.5-8 10.5-8s7.5 2.5 10.5 8c-3 5.5-6.5 8-10.5 8s-7.5-2.5-10.5-8z"/><circle cx="2543.0" cy="751" r="3.3"/><path d="M2533.5 760.5l19-19"/><path d="M2576 760l1.8-6.5 12.5-12.5a2.6 2.6 0 0 1 3.7 3.7l-12.5 12.5z"/><path d="M2583 760.5h13"/><path d="M2627.5 755v-13M2622 747l5.5-5.5 5.5 5.5M2618 752v8.5h19v-8.5"/><path d="M2661 747v-6h6M2661 741l5.5 5.5M2680 747v-6h-6M2680 741l-5.5 5.5M2661 755v6h6M2661 761l5.5-5.5M2680 755v6h-6M2680 761l-5.5-5.5"/></g></svg>
<svg style="left:0;top:0" width="2760" height="1406"><rect x="562.5" y="841.50" width="643.5" height="1.4" fill="#d0d1d0"/><rect x="562.5" y="882.30" width="643.5" height="1.4" fill="#d0d1d0"/><rect x="562.5" y="923.05" width="643.5" height="1.4" fill="#d0d1d0"/><rect x="562.5" y="963.80" width="643.5" height="1.4" fill="#d0d1d0"/><rect x="562.5" y="1004.40" width="643.5" height="1.4" fill="#d0d1d0"/><rect x="562.5" y="1044.90" width="643.5" height="1.4" fill="#d0d1d0"/><polygon points="563.00,1080.30 588.40,1080.30 642.00,1080.30 695.60,1080.30 749.20,1080.30 802.80,1080.30 856.40,1080.30 910.00,1080.30 963.60,1080.30 1017.20,1080.30 1070.80,1080.30 1124.40,1080.30 1178.00,1080.30 1205.30,1080.30 1205.30,1086.50 1178.00,1086.50 1124.40,1086.50 1070.80,1086.50 1017.20,1086.50 963.60,1086.50 910.00,1086.50 856.40,1086.50 802.80,1086.50 749.20,1086.50 695.60,1086.50 642.00,1086.50 588.40,1086.50 563.00,1086.50" fill="#7c5ed8"/><polygon points="563.00,1077.30 588.40,1077.30 642.00,1077.30 695.60,1077.30 749.20,1077.30 802.80,1077.30 856.40,1077.30 910.00,1077.30 963.60,1077.30 1017.20,1077.30 1070.80,1077.30 1124.40,1077.30 1178.00,1077.30 1205.30,1079.00 1205.30,1080.30 1178.00,1080.30 1124.40,1080.30 1070.80,1080.30 1017.20,1080.30 963.60,1080.30 910.00,1080.30 856.40,1080.30 802.80,1080.30 749.20,1080.30 695.60,1080.30 642.00,1080.30 588.40,1080.30 563.00,1080.30" fill="#2a1048"/><polygon points="563.00,1069.65 588.40,1069.90 642.00,1070.15 695.60,1070.15 749.20,1069.90 802.80,1069.65 856.40,1069.65 910.00,1068.15 963.60,1066.65 1017.20,1066.15 1070.80,1066.15 1124.40,1066.15 1178.00,1065.65 1205.30,1071.35 1205.30,1079.00 1178.00,1077.30 1124.40,1077.30 1070.80,1077.30 1017.20,1077.30 963.60,1077.30 910.00,1077.30 856.40,1077.30 802.80,1077.30 749.20,1077.30 695.60,1077.30 642.00,1077.30 588.40,1077.30 563.00,1077.30" fill="#6448c6"/><polygon points="563.00,1062.00 588.40,1062.50 642.00,1063.00 695.60,1063.00 749.20,1062.50 802.80,1062.00 856.40,1062.00 910.00,1059.00 963.60,1056.00 1017.20,1055.00 1070.80,1055.00 1124.40,1055.00 1178.00,1054.00 1205.30,1065.40 1205.30,1071.35 1178.00,1065.65 1124.40,1066.15 1070.80,1066.15 1017.20,1066.15 963.60,1066.65 910.00,1068.15 856.40,1069.65 802.80,1069.65 749.20,1069.90 695.60,1070.15 642.00,1070.15 588.40,1069.90 563.00,1069.65" fill="#7d5fd9"/><polygon points="563.00,1062.00 588.40,1062.50 642.00,1063.00 695.60,1063.00 749.20,1062.50 802.80,1062.00 856.40,1061.50 910.00,1017.00 963.60,972.00 1017.20,1020.60 1070.80,1037.70 1124.40,1037.70 1178.00,1033.00 1205.30,1055.80 1205.30,1065.40 1178.00,1054.00 1124.40,1055.00 1070.80,1055.00 1017.20,1055.00 963.60,1056.00 910.00,1059.00 856.40,1062.00 802.80,1062.00 749.20,1062.50 695.60,1063.00 642.00,1063.00 588.40,1062.50 563.00,1062.00" fill="#230b3f"/><polygon points="563.00,1061.00 588.40,1061.50 642.00,1062.00 695.60,1062.00 749.20,1061.50 802.80,1061.00 856.40,1060.50 910.00,997.00 963.60,952.00 1017.20,1001.00 1070.80,1018.00 1124.40,1018.00 1178.00,1012.00 1205.30,1043.00 1205.30,1055.80 1178.00,1033.00 1124.40,1037.70 1070.80,1037.70 1017.20,1020.60 963.60,972.00 910.00,1017.00 856.40,1061.50 802.80,1062.00 749.20,1062.50 695.60,1063.00 642.00,1063.00 588.40,1062.50 563.00,1062.00" fill="#6a4ecc"/><polygon points="563.00,1060.50 588.40,1061.00 642.00,1061.50 695.60,1061.50 749.20,1061.00 802.80,1060.50 856.40,1060.00 910.00,985.00 963.60,936.00 1017.20,983.40 1070.80,1000.00 1124.40,1000.60 1178.00,996.80 1205.30,1031.00 1205.30,1043.00 1178.00,1012.00 1124.40,1018.00 1070.80,1018.00 1017.20,1001.00 963.60,952.00 910.00,997.00 856.40,1060.50 802.80,1061.00 749.20,1061.50 695.60,1062.00 642.00,1062.00 588.40,1061.50 563.00,1061.00" fill="#8d72e0"/><polygon points="563.00,997.00 588.40,998.50 642.00,1001.00 695.60,998.50 749.20,998.50 802.80,993.00 856.40,992.00 910.00,931.00 963.60,870.20 1017.20,916.50 1070.80,933.80 1124.40,939.60 1178.00,932.50 1205.30,995.00 1205.30,996.08 1178.00,934.43 1124.40,941.43 1070.80,935.79 1017.20,918.51 963.60,872.17 910.00,932.62 856.40,994.04 802.80,995.02 749.20,1000.38 695.60,1000.39 642.00,1002.82 588.40,1000.38 563.00,998.90" fill="#7c5fd7"/><polygon points="563.00,998.90 588.40,1000.38 642.00,1002.82 695.60,1000.39 749.20,1000.38 802.80,995.02 856.40,994.04 910.00,932.62 963.60,872.17 1017.20,918.51 1070.80,935.79 1124.40,941.43 1178.00,934.43 1205.30,996.08 1205.30,997.16 1178.00,936.36 1124.40,943.26 1070.80,937.77 1017.20,920.51 963.60,874.15 910.00,934.24 856.40,996.08 802.80,997.05 749.20,1002.25 695.60,1002.28 642.00,1004.63 588.40,1002.25 563.00,1000.81" fill="#6547c8"/><polygon points="563.00,1000.81 588.40,1002.25 642.00,1004.63 695.60,1002.28 749.20,1002.25 802.80,997.05 856.40,996.08 910.00,934.24 963.60,874.15 1017.20,920.51 1070.80,937.77 1124.40,943.26 1178.00,936.36 1205.30,997.16 1205.30,998.60 1178.00,938.93 1124.40,945.70 1070.80,940.42 1017.20,923.19 963.60,876.78 910.00,936.40 856.40,998.80 802.80,999.75 749.20,1004.75 695.60,1004.80 642.00,1007.05 588.40,1004.75 563.00,1003.35" fill="#8a6fdd"/><polygon points="563.00,1003.35 588.40,1004.75 642.00,1007.05 695.60,1004.80 749.20,1004.75 802.80,999.75 856.40,998.80 910.00,936.40 963.60,876.78 1017.20,923.19 1070.80,940.42 1124.40,945.70 1178.00,938.93 1205.30,998.60 1205.30,1000.04 1178.00,941.50 1124.40,948.14 1070.80,943.07 1017.20,925.87 963.60,879.41 910.00,938.56 856.40,1001.52 802.80,1002.45 749.20,1007.25 695.60,1007.32 642.00,1009.47 588.40,1007.25 563.00,1005.89" fill="#7a5dd6"/><polygon points="563.00,1005.89 588.40,1007.25 642.00,1009.47 695.60,1007.32 749.20,1007.25 802.80,1002.45 856.40,1001.52 910.00,938.56 963.60,879.41 1017.20,925.87 1070.80,943.07 1124.40,948.14 1178.00,941.50 1205.30,1000.04 1205.30,1001.48 1178.00,944.07 1124.40,950.58 1070.80,945.72 1017.20,928.54 963.60,882.04 910.00,940.72 856.40,1004.24 802.80,1005.15 749.20,1009.75 695.60,1009.84 642.00,1011.89 588.40,1009.75 563.00,1008.43" fill="#5d42c0"/><polygon points="563.00,1008.43 588.40,1009.75 642.00,1011.89 695.60,1009.84 749.20,1009.75 802.80,1005.15 856.40,1004.24 910.00,940.72 963.60,882.04 1017.20,928.54 1070.80,945.72 1124.40,950.58 1178.00,944.07 1205.30,1001.48 1205.30,1003.28 1178.00,947.29 1124.40,953.63 1070.80,949.03 1017.20,931.89 963.60,885.33 910.00,943.42 856.40,1007.64 802.80,1008.52 749.20,1012.88 695.60,1012.99 642.00,1014.91 588.40,1012.88 563.00,1011.61" fill="#2c114d"/><polygon points="563.00,1011.61 588.40,1012.88 642.00,1014.91 695.60,1012.99 749.20,1012.88 802.80,1008.52 856.40,1007.64 910.00,943.42 963.60,885.33 1017.20,931.89 1070.80,949.03 1124.40,953.63 1178.00,947.29 1205.30,1003.28 1205.30,1005.08 1178.00,950.50 1124.40,956.68 1070.80,952.34 1017.20,935.23 963.60,888.62 910.00,946.12 856.40,1011.04 802.80,1011.90 749.20,1016.00 695.60,1016.14 642.00,1017.94 588.40,1016.00 563.00,1014.78" fill="#5a3fbf"/><polygon points="563.00,1014.78 588.40,1016.00 642.00,1017.94 695.60,1016.14 749.20,1016.00 802.80,1011.90 856.40,1011.04 910.00,946.12 963.60,888.62 1017.20,935.23 1070.80,952.34 1124.40,956.68 1178.00,950.50 1205.30,1005.08 1205.30,1006.88 1178.00,953.72 1124.40,959.73 1070.80,955.65 1017.20,938.58 963.60,891.91 910.00,948.82 856.40,1014.44 802.80,1015.27 749.20,1019.12 695.60,1019.29 642.00,1020.97 588.40,1019.12 563.00,1017.96" fill="#a48fe8"/><polygon points="563.00,1017.96 588.40,1019.12 642.00,1020.97 695.60,1019.29 749.20,1019.12 802.80,1015.27 856.40,1014.44 910.00,948.82 963.60,891.91 1017.20,938.58 1070.80,955.65 1124.40,959.73 1178.00,953.72 1205.30,1006.88 1205.30,1008.68 1178.00,956.93 1124.40,962.78 1070.80,958.96 1017.20,941.92 963.60,895.20 910.00,951.52 856.40,1017.84 802.80,1018.65 749.20,1022.25 695.60,1022.44 642.00,1023.99 588.40,1022.25 563.00,1021.13" fill="#6b4fcb"/><polygon points="563.00,1021.13 588.40,1022.25 642.00,1023.99 695.60,1022.44 749.20,1022.25 802.80,1018.65 856.40,1017.84 910.00,951.52 963.60,895.20 1017.20,941.92 1070.80,958.96 1124.40,962.78 1178.00,956.93 1205.30,1008.68 1205.30,1010.48 1178.00,960.15 1124.40,965.83 1070.80,962.27 1017.20,945.27 963.60,898.49 910.00,954.22 856.40,1021.24 802.80,1022.02 749.20,1025.38 695.60,1025.59 642.00,1027.02 588.40,1025.38 563.00,1024.31" fill="#8a6fdd"/><polygon points="563.00,1024.31 588.40,1025.38 642.00,1027.02 695.60,1025.59 749.20,1025.38 802.80,1022.02 856.40,1021.24 910.00,954.22 963.60,898.49 1017.20,945.27 1070.80,962.27 1124.40,965.83 1178.00,960.15 1205.30,1010.48 1205.30,1012.28 1178.00,963.36 1124.40,968.88 1070.80,965.58 1017.20,948.61 963.60,901.78 910.00,956.92 856.40,1024.64 802.80,1025.40 749.20,1028.50 695.60,1028.74 642.00,1030.04 588.40,1028.50 563.00,1027.48" fill="#5a3ebc"/><polygon points="563.00,1027.48 588.40,1028.50 642.00,1030.04 695.60,1028.74 749.20,1028.50 802.80,1025.40 856.40,1024.64 910.00,956.92 963.60,901.78 1017.20,948.61 1070.80,965.58 1124.40,968.88 1178.00,963.36 1205.30,1012.28 1205.30,1014.08 1178.00,966.58 1124.40,971.93 1070.80,968.89 1017.20,951.96 963.60,905.07 910.00,959.62 856.40,1028.04 802.80,1028.78 749.20,1031.62 695.60,1031.89 642.00,1033.07 588.40,1031.62 563.00,1030.65" fill="#b3a1ee"/><polygon points="563.00,1030.65 588.40,1031.62 642.00,1033.07 695.60,1031.89 749.20,1031.62 802.80,1028.78 856.40,1028.04 910.00,959.62 963.60,905.07 1017.20,951.96 1070.80,968.89 1124.40,971.93 1178.00,966.58 1205.30,1014.08 1205.30,1015.88 1178.00,969.79 1124.40,974.98 1070.80,972.20 1017.20,955.30 963.60,908.36 910.00,962.32 856.40,1031.44 802.80,1032.15 749.20,1034.75 695.60,1035.04 642.00,1036.09 588.40,1034.75 563.00,1033.83" fill="#6b4fcb"/><polygon points="563.00,1033.83 588.40,1034.75 642.00,1036.09 695.60,1035.04 749.20,1034.75 802.80,1032.15 856.40,1031.44 910.00,962.32 963.60,908.36 1017.20,955.30 1070.80,972.20 1124.40,974.98 1178.00,969.79 1205.30,1015.88 1205.30,1017.68 1178.00,973.01 1124.40,978.03 1070.80,975.51 1017.20,958.65 963.60,911.65 910.00,965.02 856.40,1034.84 802.80,1035.53 749.20,1037.88 695.60,1038.19 642.00,1039.12 588.40,1037.88 563.00,1037.01" fill="#9079df"/><polygon points="563.00,1037.01 588.40,1037.88 642.00,1039.12 695.60,1038.19 749.20,1037.88 802.80,1035.53 856.40,1034.84 910.00,965.02 963.60,911.65 1017.20,958.65 1070.80,975.51 1124.40,978.03 1178.00,973.01 1205.30,1017.68 1205.30,1019.48 1178.00,976.22 1124.40,981.08 1070.80,978.82 1017.20,961.99 963.60,914.94 910.00,967.72 856.40,1038.24 802.80,1038.90 749.20,1041.00 695.60,1041.34 642.00,1042.14 588.40,1041.00 563.00,1040.18" fill="#5e43c1"/><polygon points="563.00,1040.18 588.40,1041.00 642.00,1042.14 695.60,1041.34 749.20,1041.00 802.80,1038.90 856.40,1038.24 910.00,967.72 963.60,914.94 1017.20,961.99 1070.80,978.82 1124.40,981.08 1178.00,976.22 1205.30,1019.48 1205.30,1021.28 1178.00,979.44 1124.40,984.13 1070.80,982.13 1017.20,965.34 963.60,918.23 910.00,970.42 856.40,1041.64 802.80,1042.28 749.20,1044.12 695.60,1044.49 642.00,1045.16 588.40,1044.12 563.00,1043.36" fill="#8b70dc"/><polygon points="563.00,1043.36 588.40,1044.12 642.00,1045.16 695.60,1044.49 749.20,1044.12 802.80,1042.28 856.40,1041.64 910.00,970.42 963.60,918.23 1017.20,965.34 1070.80,982.13 1124.40,984.13 1178.00,979.44 1205.30,1021.28 1205.30,1023.08 1178.00,982.65 1124.40,987.18 1070.80,985.44 1017.20,968.68 963.60,921.52 910.00,973.12 856.40,1045.04 802.80,1045.65 749.20,1047.25 695.60,1047.64 642.00,1048.19 588.40,1047.25 563.00,1046.53" fill="#6347c6"/><polygon points="563.00,1046.53 588.40,1047.25 642.00,1048.19 695.60,1047.64 749.20,1047.25 802.80,1045.65 856.40,1045.04 910.00,973.12 963.60,921.52 1017.20,968.68 1070.80,985.44 1124.40,987.18 1178.00,982.65 1205.30,1023.08 1205.30,1024.88 1178.00,985.87 1124.40,990.23 1070.80,988.75 1017.20,972.03 963.60,924.81 910.00,975.82 856.40,1048.44 802.80,1049.03 749.20,1050.38 695.60,1050.79 642.00,1051.21 588.40,1050.38 563.00,1049.70" fill="#a38de7"/><polygon points="563.00,1049.70 588.40,1050.38 642.00,1051.21 695.60,1050.79 749.20,1050.38 802.80,1049.03 856.40,1048.44 910.00,975.82 963.60,924.81 1017.20,972.03 1070.80,988.75 1124.40,990.23 1178.00,985.87 1205.30,1024.88 1205.30,1026.68 1178.00,989.08 1124.40,993.28 1070.80,992.06 1017.20,975.37 963.60,928.10 910.00,978.52 856.40,1051.84 802.80,1052.40 749.20,1053.50 695.60,1053.94 642.00,1054.24 588.40,1053.50 563.00,1052.88" fill="#7357cf"/><polygon points="563.00,1052.88 588.40,1053.50 642.00,1054.24 695.60,1053.94 749.20,1053.50 802.80,1052.40 856.40,1051.84 910.00,978.52 963.60,928.10 1017.20,975.37 1070.80,992.06 1124.40,993.28 1178.00,989.08 1205.30,1026.68 1205.30,1028.84 1178.00,992.94 1124.40,996.94 1070.80,996.03 1017.20,979.39 963.60,932.05 910.00,981.76 856.40,1055.92 802.80,1056.45 749.20,1057.25 695.60,1057.72 642.00,1057.87 588.40,1057.25 563.00,1056.69" fill="#5b40bd"/><polygon points="563.00,1056.69 588.40,1057.25 642.00,1057.87 695.60,1057.72 749.20,1057.25 802.80,1056.45 856.40,1055.92 910.00,981.76 963.60,932.05 1017.20,979.39 1070.80,996.03 1124.40,996.94 1178.00,992.94 1205.30,1028.84 1205.30,1031.00 1178.00,996.80 1124.40,1000.60 1070.80,1000.00 1017.20,983.40 963.60,936.00 910.00,985.00 856.40,1060.00 802.80,1060.50 749.20,1061.00 695.60,1061.50 642.00,1061.50 588.40,1061.00 563.00,1060.50" fill="#8d73de"/><polyline points="563.00,998.90 588.40,1000.38 642.00,1002.82 695.60,1000.39 749.20,1000.38 802.80,995.02 856.40,994.04 910.00,932.62 963.60,872.17 1017.20,918.51 1070.80,935.79 1124.40,941.43 1178.00,934.43 1205.30,996.08" fill="none" stroke="#3b1f78" stroke-opacity="0.45" stroke-width="0.9"/><polyline points="563.00,1000.81 588.40,1002.25 642.00,1004.63 695.60,1002.28 749.20,1002.25 802.80,997.05 856.40,996.08 910.00,934.24 963.60,874.15 1017.20,920.51 1070.80,937.77 1124.40,943.26 1178.00,936.36 1205.30,997.16" fill="none" stroke="#3b1f78" stroke-opacity="0.45" stroke-width="0.9"/><polyline points="563.00,1003.35 588.40,1004.75 642.00,1007.05 695.60,1004.80 749.20,1004.75 802.80,999.75 856.40,998.80 910.00,936.40 963.60,876.78 1017.20,923.19 1070.80,940.42 1124.40,945.70 1178.00,938.93 1205.30,998.60" fill="none" stroke="#3b1f78" stroke-opacity="0.45" stroke-width="0.9"/><polyline points="563.00,1005.89 588.40,1007.25 642.00,1009.47 695.60,1007.32 749.20,1007.25 802.80,1002.45 856.40,1001.52 910.00,938.56 963.60,879.41 1017.20,925.87 1070.80,943.07 1124.40,948.14 1178.00,941.50 1205.30,1000.04" fill="none" stroke="#3b1f78" stroke-opacity="0.45" stroke-width="0.9"/><polyline points="563.00,1008.43 588.40,1009.75 642.00,1011.89 695.60,1009.84 749.20,1009.75 802.80,1005.15 856.40,1004.24 910.00,940.72 963.60,882.04 1017.20,928.54 1070.80,945.72 1124.40,950.58 1178.00,944.07 1205.30,1001.48" fill="none" stroke="#3b1f78" stroke-opacity="0.45" stroke-width="0.9"/><polyline points="563.00,1011.61 588.40,1012.88 642.00,1014.91 695.60,1012.99 749.20,1012.88 802.80,1008.52 856.40,1007.64 910.00,943.42 963.60,885.33 1017.20,931.89 1070.80,949.03 1124.40,953.63 1178.00,947.29 1205.30,1003.28" fill="none" stroke="#3b1f78" stroke-opacity="0.45" stroke-width="0.9"/><polyline points="563.00,1014.78 588.40,1016.00 642.00,1017.94 695.60,1016.14 749.20,1016.00 802.80,1011.90 856.40,1011.04 910.00,946.12 963.60,888.62 1017.20,935.23 1070.80,952.34 1124.40,956.68 1178.00,950.50 1205.30,1005.08" fill="none" stroke="#3b1f78" stroke-opacity="0.45" stroke-width="0.9"/><polyline points="563.00,1017.96 588.40,1019.12 642.00,1020.97 695.60,1019.29 749.20,1019.12 802.80,1015.27 856.40,1014.44 910.00,948.82 963.60,891.91 1017.20,938.58 1070.80,955.65 1124.40,959.73 1178.00,953.72 1205.30,1006.88" fill="none" stroke="#3b1f78" stroke-opacity="0.45" stroke-width="0.9"/><polyline points="563.00,1021.13 588.40,1022.25 642.00,1023.99 695.60,1022.44 749.20,1022.25 802.80,1018.65 856.40,1017.84 910.00,951.52 963.60,895.20 1017.20,941.92 1070.80,958.96 1124.40,962.78 1178.00,956.93 1205.30,1008.68" fill="none" stroke="#3b1f78" stroke-opacity="0.45" stroke-width="0.9"/><polyline points="563.00,1024.31 588.40,1025.38 642.00,1027.02 695.60,1025.59 749.20,1025.38 802.80,1022.02 856.40,1021.24 910.00,954.22 963.60,898.49 1017.20,945.27 1070.80,962.27 1124.40,965.83 1178.00,960.15 1205.30,1010.48" fill="none" stroke="#3b1f78" stroke-opacity="0.45" stroke-width="0.9"/><polyline points="563.00,1027.48 588.40,1028.50 642.00,1030.04 695.60,1028.74 749.20,1028.50 802.80,1025.40 856.40,1024.64 910.00,956.92 963.60,901.78 1017.20,948.61 1070.80,965.58 1124.40,968.88 1178.00,963.36 1205.30,1012.28" fill="none" stroke="#3b1f78" stroke-opacity="0.45" stroke-width="0.9"/><polyline points="563.00,1030.65 588.40,1031.62 642.00,1033.07 695.60,1031.89 749.20,1031.62 802.80,1028.78 856.40,1028.04 910.00,959.62 963.60,905.07 1017.20,951.96 1070.80,968.89 1124.40,971.93 1178.00,966.58 1205.30,1014.08" fill="none" stroke="#3b1f78" stroke-opacity="0.45" stroke-width="0.9"/><polyline points="563.00,1033.83 588.40,1034.75 642.00,1036.09 695.60,1035.04 749.20,1034.75 802.80,1032.15 856.40,1031.44 910.00,962.32 963.60,908.36 1017.20,955.30 1070.80,972.20 1124.40,974.98 1178.00,969.79 1205.30,1015.88" fill="none" stroke="#3b1f78" stroke-opacity="0.45" stroke-width="0.9"/><polyline points="563.00,1037.01 588.40,1037.88 642.00,1039.12 695.60,1038.19 749.20,1037.88 802.80,1035.53 856.40,1034.84 910.00,965.02 963.60,911.65 1017.20,958.65 1070.80,975.51 1124.40,978.03 1178.00,973.01 1205.30,1017.68" fill="none" stroke="#3b1f78" stroke-opacity="0.45" stroke-width="0.9"/><polyline points="563.00,1040.18 588.40,1041.00 642.00,1042.14 695.60,1041.34 749.20,1041.00 802.80,1038.90 856.40,1038.24 910.00,967.72 963.60,914.94 1017.20,961.99 1070.80,978.82 1124.40,981.08 1178.00,976.22 1205.30,1019.48" fill="none" stroke="#3b1f78" stroke-opacity="0.45" stroke-width="0.9"/><polyline points="563.00,1043.36 588.40,1044.12 642.00,1045.16 695.60,1044.49 749.20,1044.12 802.80,1042.28 856.40,1041.64 910.00,970.42 963.60,918.23 1017.20,965.34 1070.80,982.13 1124.40,984.13 1178.00,979.44 1205.30,1021.28" fill="none" stroke="#3b1f78" stroke-opacity="0.45" stroke-width="0.9"/><polyline points="563.00,1046.53 588.40,1047.25 642.00,1048.19 695.60,1047.64 749.20,1047.25 802.80,1045.65 856.40,1045.04 910.00,973.12 963.60,921.52 1017.20,968.68 1070.80,985.44 1124.40,987.18 1178.00,982.65 1205.30,1023.08" fill="none" stroke="#3b1f78" stroke-opacity="0.45" stroke-width="0.9"/><polyline points="563.00,1049.70 588.40,1050.38 642.00,1051.21 695.60,1050.79 749.20,1050.38 802.80,1049.03 856.40,1048.44 910.00,975.82 963.60,924.81 1017.20,972.03 1070.80,988.75 1124.40,990.23 1178.00,985.87 1205.30,1024.88" fill="none" stroke="#3b1f78" stroke-opacity="0.45" stroke-width="0.9"/><polyline points="563.00,1052.88 588.40,1053.50 642.00,1054.24 695.60,1053.94 749.20,1053.50 802.80,1052.40 856.40,1051.84 910.00,978.52 963.60,928.10 1017.20,975.37 1070.80,992.06 1124.40,993.28 1178.00,989.08 1205.30,1026.68" fill="none" stroke="#3b1f78" stroke-opacity="0.45" stroke-width="0.9"/><polyline points="563.00,1056.69 588.40,1057.25 642.00,1057.87 695.60,1057.72 749.20,1057.25 802.80,1056.45 856.40,1055.92 910.00,981.76 963.60,932.05 1017.20,979.39 1070.80,996.03 1124.40,996.94 1178.00,992.94 1205.30,1028.84" fill="none" stroke="#3b1f78" stroke-opacity="0.45" stroke-width="0.9"/><polyline points="563.00,1060.50 588.40,1061.00 642.00,1061.50 695.60,1061.50 749.20,1061.00 802.80,1060.50 856.40,1060.00 910.00,985.00 963.60,936.00 1017.20,983.40 1070.80,1000.00 1124.40,1000.60 1178.00,996.80 1205.30,1031.00" fill="none" stroke="#3b1f78" stroke-opacity="0.45" stroke-width="0.9"/><polyline points="563.00,1061.00 588.40,1061.50 642.00,1062.00 695.60,1062.00 749.20,1061.50 802.80,1061.00 856.40,1060.50 910.00,997.00 963.60,952.00 1017.20,1001.00 1070.80,1018.00 1124.40,1018.00 1178.00,1012.00 1205.30,1043.00" fill="none" stroke="#3b1f78" stroke-opacity="0.45" stroke-width="0.9"/><polyline points="563.00,1062.00 588.40,1062.50 642.00,1063.00 695.60,1063.00 749.20,1062.50 802.80,1062.00 856.40,1061.50 910.00,1017.00 963.60,972.00 1017.20,1020.60 1070.80,1037.70 1124.40,1037.70 1178.00,1033.00 1205.30,1055.80" fill="none" stroke="#3b1f78" stroke-opacity="0.45" stroke-width="0.9"/><polyline points="563.00,1062.00 588.40,1062.50 642.00,1063.00 695.60,1063.00 749.20,1062.50 802.80,1062.00 856.40,1062.00 910.00,1059.00 963.60,1056.00 1017.20,1055.00 1070.80,1055.00 1124.40,1055.00 1178.00,1054.00 1205.30,1065.40" fill="none" stroke="#3b1f78" stroke-opacity="0.45" stroke-width="0.9"/><rect x="641.75" y="1086.5" width="1.5" height="6.5" fill="#5b5f64"/><rect x="801.75" y="1086.5" width="1.5" height="6.5" fill="#5b5f64"/><rect x="962.5" y="1086.5" width="1.5" height="6.5" fill="#5b5f64"/><rect x="1123.75" y="1086.5" width="1.5" height="6.5" fill="#5b5f64"/><rect x="1305" y="801.70" width="644" height="1.4" fill="#d0d1d0"/><rect x="1305" y="872.50" width="644" height="1.4" fill="#d0d1d0"/><rect x="1305" y="943.40" width="644" height="1.4" fill="#d0d1d0"/><rect x="1305" y="1014.40" width="644" height="1.4" fill="#d0d1d0"/><rect x="1305.4" y="905" width="23.80" height="181.00" fill="#8bb0dc"/><rect x="1305.4" y="1074.3" width="23.80" height="3.00" fill="#4a84c9"/><rect x="1305.4" y="1077.3" width="23.80" height="3.70" fill="#ddd38b"/><rect x="1305.4" y="1081" width="23.80" height="2.00" fill="#b7a9e2"/><rect x="1305.4" y="905" width="23.80" height="2.50" fill="#7b62c9"/><rect x="1305.4" y="908" width="23.80" height="3.00" fill="#ddd38b"/><rect x="1331" y="905" width="51.50" height="181.00" fill="#8bb0dc"/><rect x="1331" y="1079.2" width="51.50" height="1.80" fill="#7b62c9"/><rect x="1331" y="1081" width="51.50" height="3.00" fill="#ddd38b"/><rect x="1331" y="905" width="51.50" height="2.00" fill="#7b62c9"/><rect x="1331" y="908" width="51.50" height="3.00" fill="#ddd38b"/><rect x="1384.3" y="862.7" width="51.90" height="223.30" fill="#8bb0dc"/><rect x="1384.3" y="1074" width="51.90" height="2.00" fill="#7b62c9"/><rect x="1384.3" y="1076" width="51.90" height="7.00" fill="#ddd38b"/><rect x="1384.3" y="862.7" width="51.90" height="2.30" fill="#b7a9e2"/><rect x="1384.3" y="865.5" width="51.90" height="3.50" fill="#ddd38b"/><rect x="1438" y="890" width="51.50" height="196.00" fill="#8bb0dc"/><rect x="1438" y="1081" width="51.50" height="3.00" fill="#ddd38b"/><rect x="1438" y="890" width="51.50" height="2.00" fill="#7b62c9"/><rect x="1438" y="892.5" width="51.50" height="3.50" fill="#ddd38b"/><rect x="1491.2" y="923.4" width="51.90" height="162.60" fill="#8bb0dc"/><rect x="1491.2" y="1060" width="51.90" height="17.60" fill="#4a84c9"/><rect x="1491.2" y="1077.6" width="51.90" height="2.90" fill="#b7a9e2"/><rect x="1491.2" y="1080.5" width="51.90" height="3.50" fill="#ddd38b"/><rect x="1491.2" y="923.4" width="51.90" height="2.10" fill="#b7a9e2"/><rect x="1491.2" y="926" width="51.90" height="3.70" fill="#ddd38b"/><rect x="1544.9" y="920.6" width="51.50" height="165.40" fill="#8bb0dc"/><rect x="1544.9" y="1026.8" width="51.50" height="42.10" fill="#4a84c9"/><rect x="1544.9" y="1068.9" width="51.50" height="1.70" fill="#7b62c9"/><rect x="1544.9" y="1070.6" width="51.50" height="14.00" fill="#ddd38b"/><rect x="1544.9" y="920.6" width="51.50" height="2.40" fill="#7b62c9"/><rect x="1544.9" y="923" width="51.50" height="2.00" fill="#b7a9e2"/><rect x="1598.2" y="922.3" width="52.60" height="163.70" fill="#8bb0dc"/><rect x="1598.2" y="1049.6" width="52.60" height="26.30" fill="#4a84c9"/><rect x="1598.2" y="1075.9" width="52.60" height="3.60" fill="#ddd38b"/><rect x="1598.2" y="1079.5" width="52.60" height="2.50" fill="#b7a9e2"/><rect x="1598.2" y="922.3" width="52.60" height="2.00" fill="#7b62c9"/><rect x="1598.2" y="924.5" width="52.60" height="4.00" fill="#b7a9e2"/><rect x="1652.5" y="914.6" width="52.50" height="171.40" fill="#8bb0dc"/><rect x="1652.5" y="1065.4" width="52.50" height="14.00" fill="#4a84c9"/><rect x="1652.5" y="1079.4" width="52.50" height="3.60" fill="#ddd38b"/><rect x="1652.5" y="918.8" width="52.50" height="1.80" fill="#7b62c9"/><rect x="1706.9" y="941.6" width="51.90" height="144.40" fill="#8bb0dc"/><rect x="1706.9" y="1072.4" width="51.90" height="7.00" fill="#4a84c9"/><rect x="1706.9" y="1079.4" width="51.90" height="2.10" fill="#7b62c9"/><rect x="1706.9" y="1081.5" width="51.90" height="2.50" fill="#ddd38b"/><rect x="1706.9" y="941.6" width="51.90" height="1.90" fill="#b7a9e2"/><rect x="1706.9" y="944.4" width="51.90" height="3.60" fill="#ddd38b"/><rect x="1760.5" y="944.4" width="51.50" height="141.60" fill="#8bb0dc"/><rect x="1760.5" y="1070" width="51.50" height="7.60" fill="#4a84c9"/><rect x="1760.5" y="1077.6" width="51.50" height="5.40" fill="#ddd38b"/><rect x="1760.5" y="944.4" width="51.50" height="2.10" fill="#7b62c9"/><rect x="1760.5" y="947" width="51.50" height="2.50" fill="#b7a9e2"/><rect x="1760.5" y="949.7" width="51.50" height="3.30" fill="#ddd38b"/><rect x="1813.8" y="882" width="51.90" height="204.00" fill="#8bb0dc"/><rect x="1813.8" y="1080" width="51.90" height="4.00" fill="#ddd38b"/><rect x="1813.8" y="882" width="51.90" height="2.00" fill="#8a8d9a"/><rect x="1813.8" y="884.5" width="51.90" height="2.00" fill="#ddd38b"/><rect x="1813.8" y="887" width="51.90" height="2.00" fill="#7b62c9"/><rect x="1813.8" y="889.5" width="51.90" height="2.00" fill="#b7a9e2"/><rect x="1867.5" y="873" width="51.50" height="213.00" fill="#8bb0dc"/><rect x="1867.5" y="1079.5" width="51.50" height="2.50" fill="#b7a9e2"/><rect x="1867.5" y="1082" width="51.50" height="2.50" fill="#ddd38b"/><rect x="1867.5" y="873.2" width="51.50" height="2.30" fill="#b7a9e2"/><rect x="1867.5" y="876" width="51.50" height="3.50" fill="#ddd38b"/><rect x="1920.7" y="908.3" width="28.10" height="177.70" fill="#8bb0dc"/><rect x="1920.7" y="1075" width="28.10" height="3.00" fill="#4a84c9"/><rect x="1920.7" y="1078" width="28.10" height="6.00" fill="#ddd38b"/><rect x="1920.7" y="908.3" width="28.10" height="2.70" fill="#7b62c9"/><rect x="1305" y="1084.8" width="644" height="2.2" fill="#5d6166"/><rect x="1384.0" y="1086.5" width="1.5" height="6.5" fill="#5b5f64"/><rect x="1545.0" y="1086.5" width="1.5" height="6.5" fill="#5b5f64"/><rect x="1705.75" y="1086.5" width="1.5" height="6.5" fill="#5b5f64"/><rect x="1866.75" y="1086.5" width="1.5" height="6.5" fill="#5b5f64"/><rect x="2047.5" y="801.20" width="643.5" height="1.4" fill="#d0d1d0"/><rect x="2047.5" y="858.10" width="643.5" height="1.4" fill="#d0d1d0"/><rect x="2047.5" y="915.00" width="643.5" height="1.4" fill="#d0d1d0"/><rect x="2047.5" y="971.80" width="643.5" height="1.4" fill="#d0d1d0"/><rect x="2047.5" y="1028.70" width="643.5" height="1.4" fill="#d0d1d0"/><polyline points="2047.64,1082.84 2073.94,1082.84 2127.57,1082.84 2180.86,1082.84 2235.20,1082.84 2288.48,1082.84 2342.12,1082.84 2395.76,1082.84 2449.04,1082.84 2503.38,1082.84 2557.02,1082.84 2610.31,1082.84 2663.94,1082.84 2690.94,1082.84" fill="none" stroke="#b9aaea" stroke-width="3" stroke-linejoin="round"/><polyline points="2047.64,1080.39 2073.94,1080.04 2127.57,1080.39 2180.86,1080.74 2235.20,1080.74 2288.48,1080.04 2342.12,1080.74 2395.76,1080.74 2449.04,1080.04 2503.38,1080.39 2557.02,1078.98 2610.31,1078.63 2663.94,1079.68 2690.94,1080.74" fill="none" stroke="#9c86e0" stroke-width="5" stroke-linejoin="round"/><polyline points="2047.64,1077.58 2073.94,1075.83 2127.57,1073.37 2180.86,1077.58 2235.20,1078.28 2288.48,1074.78 2342.12,1077.58 2395.76,1076.88 2449.04,1074.78 2503.38,1078.28 2557.02,1077.58 2610.31,1075.83 2663.94,1077.58 2690.94,1079.33" fill="none" stroke="#9c86e0" stroke-width="2.2" stroke-linejoin="round"/><polyline points="2047.64,1074.78 2073.94,1074.78 2127.57,1073.37 2180.86,1074.78 2235.20,1075.83 2288.48,1075.83 2342.12,1074.78 2395.76,1074.78 2449.04,1075.83 2503.38,1074.78 2557.02,1074.08 2610.31,1073.37 2663.94,1074.78 2690.94,1076.88" fill="none" stroke="#dcb54a" stroke-width="2.2" stroke-linejoin="round"/><polyline points="2047.64,1035.51 2073.94,1035.51 2127.57,1034.81 2180.86,1033.76 2235.20,1037.27 2288.48,1033.76 2342.12,1032.01 2395.76,1033.76 2449.04,1032.01 2503.38,1033.76 2557.02,1035.51 2610.31,1034.81 2663.94,1033.76 2690.94,1019.74" fill="none" stroke="#4a8fd8" stroke-width="2.4" stroke-linejoin="round"/><polyline points="2047.64,1033.76 2073.94,1033.06 2127.57,1033.76 2180.86,1035.51 2235.20,1033.76 2288.48,1035.51 2342.12,1033.76 2395.76,1032.01 2449.04,1037.27 2503.38,1037.27 2557.02,1042.52 2610.31,1039.02 2663.94,1030.25 2690.94,1033.76" fill="none" stroke="#4a8fd8" stroke-width="2.4" stroke-linejoin="round"/><polyline points="2047.64,1033.76 2073.94,1030.25 2127.57,1058.30 2180.86,1039.02 2235.20,1035.51 2288.48,1039.72 2342.12,1039.02 2395.76,1039.02 2449.04,1037.27 2503.38,1047.78 2557.02,1054.79 2610.31,1032.01 2663.94,1032.01 2690.94,1032.01" fill="none" stroke="#dcb54a" stroke-width="2.4" stroke-linejoin="round"/><polyline points="2047.64,996.95 2073.94,1000.46 2127.57,998.70 2180.86,998.70 2235.20,1000.46 2288.48,998.70 2342.12,1000.46 2395.76,1000.46 2449.04,1000.46 2503.38,1000.46 2557.02,1000.46 2610.31,1000.46 2663.94,1002.21 2690.94,1002.21" fill="none" stroke="#9c86e0" stroke-width="2.2" stroke-linejoin="round"/><polyline points="2047.64,1002.21 2073.94,1000.46 2127.57,1000.46 2180.86,1000.46 2235.20,1002.21 2288.48,1000.46 2342.12,1000.46 2395.76,993.44 2449.04,1000.46 2503.38,1002.21 2557.02,1000.46 2610.31,996.95 2663.94,1000.46 2690.94,1002.21" fill="none" stroke="#4a8fd8" stroke-width="2.2" stroke-linejoin="round"/><polyline points="2047.64,1000.46 2073.94,1000.46 2127.57,996.95 2180.86,1002.21 2235.20,999.75 2288.48,1002.21 2342.12,1002.21 2395.76,1000.46 2449.04,1002.21 2503.38,1000.46 2557.02,1002.21 2610.31,1002.21 2663.94,1003.26 2690.94,1003.26" fill="none" stroke="#dcb54a" stroke-width="2.2" stroke-linejoin="round"/><polyline points="2047.64,1003.96 2073.94,1003.26 2127.57,1002.21 2180.86,1003.26 2235.20,1003.26 2288.48,1002.21 2342.12,1003.96 2395.76,1002.21 2449.04,1003.26 2503.38,1003.96 2557.02,1003.96 2610.31,1003.26 2663.94,1003.96 2690.94,1003.96" fill="none" stroke="#4e3aa8" stroke-width="2.2" stroke-linejoin="round"/><polyline points="2047.64,993.44 2073.94,996.95 2127.57,991.69 2180.86,989.24 2235.20,990.64 2288.48,989.94 2342.12,992.74 2395.76,994.15 2449.04,993.44 2503.38,995.20 2557.02,991.69 2610.31,990.64 2663.94,992.74 2690.94,996.95" fill="none" stroke="#7aa6e6" stroke-width="2.2" stroke-linejoin="round"/><polyline points="2047.64,977.67 2073.94,979.42 2127.57,978.72 2180.86,975.92 2235.20,975.21 2288.48,977.67 2342.12,975.21 2395.76,972.41 2449.04,981.17 2503.38,979.42 2557.02,981.17 2610.31,975.21 2663.94,974.16 2690.94,977.67" fill="none" stroke="#4e3aa8" stroke-width="2.4" stroke-linejoin="round"/><polyline points="2047.64,975.92 2073.94,975.21 2127.57,974.16 2180.86,970.66 2235.20,974.16 2288.48,975.21 2342.12,982.23 2395.76,981.17 2449.04,978.72 2503.38,975.21 2557.02,981.17 2610.31,969.61 2663.94,972.41 2690.94,968.90" fill="none" stroke="#4a8fd8" stroke-width="2.4" stroke-linejoin="round"/><polyline points="2047.64,905.80 2073.94,905.80 2127.57,904.05 2180.86,902.30 2235.20,905.80 2288.48,905.80 2342.12,904.05 2395.76,901.60 2449.04,904.05 2503.38,905.80 2557.02,904.05 2610.31,902.30 2663.94,905.80 2690.94,902.30" fill="none" stroke="#9c86e0" stroke-width="2.2" stroke-linejoin="round"/><polyline points="2047.64,900.54 2073.94,902.30 2127.57,904.05 2180.86,904.05 2235.20,906.50 2288.48,904.05 2342.12,905.10 2395.76,904.05 2449.04,905.10 2503.38,907.55 2557.02,904.05 2610.31,901.60 2663.94,905.80 2690.94,905.80" fill="none" stroke="#dcb54a" stroke-width="2.2" stroke-linejoin="round"/><polyline points="2047.64,905.10 2073.94,905.10 2127.57,905.10 2180.86,905.10 2235.20,900.54 2288.48,905.80 2342.12,905.80 2395.76,904.05 2449.04,905.80 2503.38,905.10 2557.02,905.80 2610.31,905.10 2663.94,907.55 2690.94,907.55" fill="none" stroke="#4e3aa8" stroke-width="2.2" stroke-linejoin="round"/><polyline points="2047.64,907.55 2073.94,907.55 2127.57,907.55 2180.86,907.55 2235.20,907.55 2288.48,909.31 2342.12,907.55 2395.76,907.55 2449.04,909.31 2503.38,907.55 2557.02,907.55 2610.31,897.04 2663.94,904.05 2690.94,904.05" fill="none" stroke="#4a8fd8" stroke-width="2.4" stroke-linejoin="round"/><polyline points="2047.64,877.76 2073.94,874.25 2127.57,877.76 2180.86,880.56 2235.20,868.99 2288.48,868.99 2342.12,879.51 2395.76,877.76 2449.04,874.25 2503.38,873.20 2557.02,881.96 2610.31,872.50 2663.94,876.00 2690.94,881.96" fill="none" stroke="#dcb54a" stroke-width="2.2" stroke-linejoin="round"/><rect x="2047.5" y="1085" width="643.5" height="2.2" fill="#5d6166"/><rect x="2126.85" y="1086.5" width="1.5" height="6.5" fill="#5b5f64"/><rect x="2287.75" y="1086.5" width="1.5" height="6.5" fill="#5b5f64"/><rect x="2448.25" y="1086.5" width="1.5" height="6.5" fill="#5b5f64"/><rect x="2609.55" y="1086.5" width="1.5" height="6.5" fill="#5b5f64"/><rect x="548" y="1138" width="16.25" height="16.5" rx="2.5" fill="#c3b5ea"/><rect x="741.25" y="1138" width="16.25" height="16.5" rx="2.5" fill="#a692e2"/><rect x="933" y="1138" width="16.25" height="16.5" rx="2.5" fill="#8a6cda"/><rect x="1290.25" y="1138" width="16.25" height="16.5" rx="2.5" fill="#8bb0dc"/><rect x="1483.25" y="1138" width="16.25" height="16.5" rx="2.5" fill="#4a84c9"/><rect x="1676.5" y="1138" width="16.25" height="16.5" rx="2.5" fill="#b9aae6"/><rect x="2032.6" y="1138" width="16.25" height="16.5" rx="2.5" fill="#4a8fd8"/><rect x="2225.75" y="1138" width="16.25" height="16.5" rx="2.5" fill="#4e3aa8"/><rect x="2419" y="1138" width="16.25" height="16.5" rx="2.5" fill="#dcb54a"/><rect x="1124.5" y="1129.75" width="46.5" height="28.5" rx="4.5" fill="none" stroke="#bcbfc3" stroke-width="1"/><rect x="1866.5" y="1129.75" width="46.75" height="28.5" rx="4.5" fill="none" stroke="#bcbfc3" stroke-width="1"/><rect x="2609.5" y="1129.75" width="46.75" height="28.5" rx="4.5" fill="none" stroke="#bcbfc3" stroke-width="1"/><rect x="494" y="777.5" width="719" height="1" fill="#d3d5d6"/><rect x="1237" y="777.5" width="717" height="1" fill="#d3d5d6"/><rect x="1980" y="777.5" width="718" height="1" fill="#d3d5d6"/><text x="0" y="0" transform="translate(514.5,958.5) rotate(-90)" text-anchor="middle" font-family="Liberation Sans" font-size="15.5" fill="#9a9da2" letter-spacing="0.3">Gibibytes</text><text x="0" y="0" transform="translate(2000,959) rotate(-90)" text-anchor="middle" font-family="Liberation Sans" font-size="15.5" fill="#9a9da2" letter-spacing="0.5">Milliseconds</text></svg>
<div style="position:absolute;left:712.50px;top:1205.50px;width:160.75px;height:42.00px;border:1px solid #bcbfc3;border-radius:5px;box-sizing:border-box"></div>
<div style="position:absolute;left:777.00px;top:1205.50px;width:1.00px;height:42.00px;background:#bcbfc3"></div>
<div style="position:absolute;left:2186.50px;top:1206.25px;width:371.25px;height:40.75px;background:#d9dad9;border-radius:6px"></div>
<div style="position:absolute;left:470.00px;top:1273.75px;width:2264.50px;height:132.25px;border:1px solid #cfd1d3;border-bottom:none;border-radius:5px 5px 0 0;box-sizing:border-box"></div>
<div style="position:absolute;left:470.00px;top:1315.00px;width:2222.00px;height:1.00px;background:#cccecf"></div>
<div style="position:absolute;left:470.00px;top:1357.75px;width:2264.00px;height:1.00px;background:#cccecf"></div>
<div style="position:absolute;left:1475.00px;top:1273.75px;width:1.00px;height:132.25px;background:#cccecf"></div>
<div style="position:absolute;left:1732.50px;top:1273.75px;width:1.00px;height:132.25px;background:#cccecf"></div>
<div style="position:absolute;left:1989.50px;top:1273.75px;width:1.00px;height:132.25px;background:#cccecf"></div>
<div style="position:absolute;left:2691.50px;top:1273.75px;width:1.00px;height:132.25px;background:#cccecf"></div>
<svg style="left:0;top:0" width="2760" height="1406" viewBox="0 0 2760 1406"><path d="M848 1223.25H862L855.0 1231.25z" fill="#50545a"/><polygon points="2610.06,1228.95 2606.24,1231.00 2605.81,1235.31 2601.65,1234.06 2598.30,1236.81 2596.25,1232.99 2591.94,1232.56 2593.19,1228.40 2590.44,1225.05 2594.26,1223.00 2594.69,1218.69 2598.85,1219.94 2602.20,1217.19 2604.25,1221.01 2608.56,1221.44 2607.31,1225.60" fill="#595d63"/><circle cx="2600.25" cy="1227" r="5.5" fill="#595d63"/><circle cx="2600.25" cy="1227" r="2.8" fill="#dfe0de"/><g fill="none" stroke="#2e3237" stroke-width="2"><path d="M1497 1326.5v19M1489 1337.5l8 8 8-8"/></g><g fill="none" stroke="#62666c" stroke-width="1.9"><path d="M1591.25 1295h22.5M1605.75 1287l8 8-8 8"/></g><g fill="none" stroke="#62666c" stroke-width="1.9"><path d="M1850.5 1295h22.5M1865.0 1287l8 8-8 8"/></g><g fill="none" stroke="#2e3237" stroke-width="2"><circle cx="493.25" cy="1383.25" r="10.25"/><path d="M483.25 1383.25h20M493.25 1373.25c-5 5-5 15 0 20M493.25 1373.25c5 5 5 15 0 20"/></g><g fill="none" stroke="#2e3237" stroke-width="2"><circle cx="956.25" cy="1383.25" r="10.25"/><path d="M946.25 1383.25h20M956.25 1373.25c-5 5-5 15 0 20M956.25 1373.25c5 5 5 15 0 20"/></g><circle cx="2713.4" cy="1374.5" r="2.4" fill="#3e4247"/><circle cx="2713.4" cy="1383.75" r="2.4" fill="#3e4247"/><circle cx="2713.4" cy="1393" r="2.4" fill="#3e4247"/></svg>
<div style="position:absolute;left:64.00px;top:1390.00px;width:2696.00px;height:16.00px;background:linear-gradient(rgba(0,0,0,0),rgba(0,0,0,0.06))"></div>
<div class="t" style="left:120.25px;top:24.68px;font:400 22.529px/22.529px 'Liberation Sans';letter-spacing:-0.676px;color:#2f5dab;transform:scaleX(0.9261);transform-origin:0 0;">Views</div>
<div class="t" style="left:284.00px;top:22.89px;font:400 29.070px/29.070px 'Liberation Sans';letter-spacing:-0.034px;color:#24282c;">Network Performance</div>
<div class="t" style="left:679.00px;top:25.66px;font:400 21.076px/21.076px 'Liberation Sans';letter-spacing:-0.632px;color:#25292e;transform:scaleX(0.9142);transform-origin:0 0;">Save</div>
<div class="t" style="left:88.04px;top:86.43px;font:400 22.529px/22.529px 'Liberation Sans';letter-spacing:-0.676px;color:#62666c;transform:scaleX(0.9568);transform-origin:0 0;">Overview</div>
<div class="t" style="left:223.50px;top:86.43px;font:400 22.529px/22.529px 'Liberation Sans';letter-spacing:-0.676px;color:#2f3338;transform:scaleX(0.9682);transform-origin:0 0;">Analytics</div>
<div class="t" style="left:354.27px;top:86.43px;font:400 22.529px/22.529px 'Liberation Sans';letter-spacing:-0.676px;color:#62666c;transform:scaleX(0.9774);transform-origin:0 0;">Map</div>
<div class="t" style="left:444.37px;top:86.43px;font:400 22.529px/22.529px 'Liberation Sans';letter-spacing:-0.676px;color:#62666c;transform:scaleX(0.8773);transform-origin:0 0;">DNS</div>
<div class="t" style="left:1747.75px;top:26.04px;font:400 21.802px/21.802px 'Liberation Sans';letter-spacing:-0.455px;color:#25292e;">Learn More</div>
<div class="t" style="left:1942.75px;top:25.29px;font:400 21.802px/21.802px 'Liberation Sans';letter-spacing:-0.372px;color:#4f5358;">1h</div>
<div class="t" style="left:1999.00px;top:26.04px;font:400 21.802px/21.802px 'Liberation Sans';letter-spacing:-0.633px;color:#25292e;">Past 1 Hour</div>
<div class="t" style="left:2576.25px;top:85.79px;font:400 21.802px/21.802px 'Liberation Sans';letter-spacing:-0.654px;color:#25292e;transform:scaleX(0.9978);transform-origin:0 0;">Dashboards</div>
<div class="t" style="left:112.03px;top:249.07px;font:700 37.427px/37.427px 'Liberation Sans';letter-spacing:-1.123px;color:#1f2a33;transform:scaleX(0.9849);transform-origin:0 0;">Recommended</div>
<div class="t" style="left:113.02px;top:302.82px;font:700 37.427px/37.427px 'Liberation Sans';letter-spacing:-1.123px;color:#8a4ff0;transform:scaleX(0.9808);transform-origin:0 0;">Queries</div>
<div class="t" style="left:2664.50px;top:170.12px;font:400 18.169px/18.169px 'Liberation Sans';letter-spacing:-0.414px;color:#5d6067;">Hide</div>
<div class="t" style="left:966.00px;top:245.51px;font:700 23.619px/23.619px 'Liberation Sans';letter-spacing:-0.293px;color:#1f2a33;">Find dependencies of</div>
<div class="t" style="left:966.50px;top:276.65px;font:400 22.000px/22.000px 'Liberation Mono';letter-spacing:0.532px;color:#2a2e33;-webkit-text-stroke:0.55px #2a2e33;">service:web-store</div>
<div class="t" style="left:1339.06px;top:351.87px;font:400 22.892px/22.892px 'Liberation Sans';letter-spacing:-0.687px;color:#2c64b8;transform:scaleX(0.9362);transform-origin:0 0;">Run Query</div>
<div class="t" style="left:1569.50px;top:245.51px;font:700 23.619px/23.619px 'Liberation Sans';letter-spacing:-0.462px;color:#1f2a33;">AWS traffic over NAT</div>
<div class="t" style="left:1568.50px;top:282.51px;font:700 23.619px/23.619px 'Liberation Sans';letter-spacing:-0.648px;color:#1f2a33;">7.1 KB/s</div>
<div class="t" style="left:1678.25px;top:286.04px;font:700 17.078px/17.078px 'Liberation Sans';letter-spacing:-0.163px;color:#ffffff;">-2.5%</div>
<div class="t" style="left:1755.75px;top:283.12px;font:400 22.892px/22.892px 'Liberation Sans';letter-spacing:-0.687px;color:#6b6f75;transform:scaleX(0.9623);transform-origin:0 0;">Traffic sent</div>
<div class="t" style="left:1942.06px;top:351.87px;font:400 22.892px/22.892px 'Liberation Sans';letter-spacing:-0.687px;color:#2c64b8;transform:scaleX(0.9386);transform-origin:0 0;">Run Query</div>
<div class="t" style="left:2171.25px;top:245.51px;font:700 23.619px/23.619px 'Liberation Sans';letter-spacing:0.224px;color:#1f2a33;">Inspect network health for</div>
<div class="t" style="left:2172.00px;top:276.65px;font:400 22.000px/22.000px 'Liberation Mono';letter-spacing:0.558px;color:#2a2e33;-webkit-text-stroke:0.55px #2a2e33;">service:chaos-engineering</div>
<div class="t" style="left:2171.25px;top:309.26px;font:700 23.619px/23.619px 'Liberation Sans';letter-spacing:-0.061px;color:#1f2a33;">737 µs</div>
<div class="t" style="left:2265.25px;top:313.66px;font:700 16.352px/16.352px 'Liberation Sans';letter-spacing:0.059px;color:#ffffff;">+0.2%</div>
<div class="t" style="left:2346.00px;top:309.87px;font:400 22.892px/22.892px 'Liberation Sans';letter-spacing:-0.687px;color:#6b6f75;transform:scaleX(0.9526);transform-origin:0 0;">Avg latency</div>
<div class="t" style="left:2545.57px;top:351.87px;font:400 22.892px/22.892px 'Liberation Sans';letter-spacing:-0.687px;color:#2c64b8;transform:scaleX(0.9314);transform-origin:0 0;">Run Query</div>
<div class="t" style="left:101.00px;top:478.14px;font:400 24.346px/24.346px 'Liberation Sans';letter-spacing:-0.403px;color:#4d5157;">Search for</div>
<div class="t" style="left:271.75px;top:478.14px;font:400 24.346px/24.346px 'Liberation Sans';letter-spacing:-0.202px;color:#7f8287;">client and server tags (e.g. "client_service:foo")</div>
<div class="t" style="left:2610.00px;top:478.43px;font:400 22.529px/22.529px 'Liberation Sans';letter-spacing:-0.641px;color:#25292e;">Filter Traffic</div>
<div class="t" style="left:135.25px;top:540.79px;font:400 21.802px/21.802px 'Liberation Sans';letter-spacing:-0.654px;color:#5b5f65;transform:scaleX(0.9873);transform-origin:0 0;">View clients as</div>
<div class="t" style="left:290.25px;top:540.79px;font:400 21.802px/21.802px 'Liberation Sans';letter-spacing:-0.087px;color:#25292e;">Auto-grouped traffic</div>
<div class="t" style="left:604.50px;top:540.79px;font:400 21.802px/21.802px 'Liberation Sans';letter-spacing:-0.654px;color:#5b5f65;transform:scaleX(0.9766);transform-origin:0 0;">View servers as</div>
<div class="t" style="left:768.25px;top:540.79px;font:400 21.802px/21.802px 'Liberation Sans';letter-spacing:-0.100px;color:#25292e;">Auto-grouped traffic</div>
<div class="t" style="left:100.00px;top:626.10px;font:400 21.439px/21.439px 'Liberation Sans';letter-spacing:-0.413px;color:#62666c;">Client</div>
<div class="t" style="left:202.75px;top:626.10px;font:400 21.439px/21.439px 'Liberation Sans';letter-spacing:-0.643px;color:#25292e;transform:scaleX(0.9834);transform-origin:0 0;">Server</div>
<div class="t" style="left:518.50px;top:630.74px;font:400 22.166px/22.166px 'Liberation Sans';letter-spacing:-0.665px;color:#2f5dab;transform:scaleX(0.9987);transform-origin:0 0;">Hide Controls</div>
<div class="t" style="left:126.00px;top:687.97px;font:400 20.712px/20.712px 'Liberation Sans';letter-spacing:-0.332px;color:#7f8287;">Search facets</div>
<div class="t" style="left:546.00px;top:689.64px;font:700 19.622px/19.622px 'Liberation Sans';letter-spacing:-0.589px;color:#25292e;transform:scaleX(0.9893);transform-origin:0 0;">Summary Graphs</div>
<div class="t" style="left:126.50px;top:741.66px;font:400 21.076px/21.076px 'Liberation Sans';letter-spacing:-0.221px;color:#5d6167;">Showing 93 of 93</div>
<div class="t" style="left:514.00px;top:739.04px;font:400 21.802px/21.802px 'Liberation Sans';letter-spacing:-0.654px;color:#25292e;transform:scaleX(0.9936);transform-origin:0 0;">Volume Sent</div>
<div class="t" style="left:118.15px;top:789.95px;font:400 19.259px/19.259px 'Liberation Sans';letter-spacing:-0.578px;color:#696d73;transform:scaleX(0.8504);transform-origin:0 0;">NETWORK</div>
<div class="t" style="left:118.50px;top:840.47px;font:700 20.712px/20.712px 'Liberation Sans';letter-spacing:-0.001px;color:#25292e;">Network Transport</div>
<div class="t" style="left:134.00px;top:887.16px;font:400 21.076px/21.076px 'Liberation Sans';letter-spacing:0.308px;color:#25292e;">tcp</div>
<div class="t" style="left:133.00px;top:925.91px;font:400 21.076px/21.076px 'Liberation Sans';letter-spacing:1.411px;color:#25292e;">udp</div>
<div class="t" style="left:117.50px;top:999.33px;font:700 19.985px/19.985px 'Liberation Sans';letter-spacing:0.261px;color:#25292e;">IP Type</div>
<div class="t" style="left:120.00px;top:1044.66px;font:400 21.076px/21.076px 'Liberation Sans';letter-spacing:0.333px;color:#25292e;">private</div>
<div class="t" style="left:121.00px;top:1083.66px;font:400 21.076px/21.076px 'Liberation Sans';letter-spacing:0.377px;color:#25292e;">other</div>
<div class="t" style="left:120.00px;top:1122.16px;font:400 21.076px/21.076px 'Liberation Sans';letter-spacing:-0.040px;color:#25292e;">loopback</div>
<div class="t" style="left:120.00px;top:1160.91px;font:400 21.076px/21.076px 'Liberation Sans';letter-spacing:-0.217px;color:#25292e;">link_local</div>
<div class="t" style="left:118.50px;top:1234.20px;font:700 19.259px/19.259px 'Liberation Sans';letter-spacing:1.034px;color:#25292e;">Domain</div>
<div class="t" style="left:134.25px;top:1280.20px;font:400 19.259px/19.259px 'Liberation Sans';letter-spacing:-0.075px;color:#7f8287;">Filter values</div>
<div class="t" style="left:121.00px;top:1328.66px;font:400 21.076px/21.076px 'Liberation Sans';letter-spacing:0.142px;color:#25292e;">auth-dotnet.default.s...</div>
<div class="t" style="left:121.00px;top:1367.91px;font:400 21.076px/21.076px 'Liberation Sans';letter-spacing:0.074px;color:#25292e;">fraud-prevention-api....</div>
<div class="t" style="left:469.50px;top:1216.83px;font:700 19.985px/19.985px 'Liberation Sans';letter-spacing:0.035px;color:#25292e;">Top 100 results found</div>
<div class="t" style="left:722.75px;top:1216.22px;font:400 20.712px/20.712px 'Liberation Sans';letter-spacing:0.510px;color:#62666c;">Limit</div>
<div class="t" style="left:790.25px;top:1216.22px;font:400 20.712px/20.712px 'Liberation Sans';letter-spacing:-0.264px;color:#25292e;">100</div>
<div class="t" style="left:2198.75px;top:1216.04px;font:400 21.802px/21.802px 'Liberation Sans';letter-spacing:-0.642px;color:#25292e;">Last updated: Mon, Jul 31, 3:56:35 pm</div>
<div class="t" style="left:2621.75px;top:1216.04px;font:400 21.802px/21.802px 'Liberation Sans';letter-spacing:-0.654px;color:#62666c;transform:scaleX(0.9963);transform-origin:0 0;">Customize</div>
<div class="t" style="left:482.00px;top:1328.08px;font:700 19.985px/19.985px 'Liberation Sans';letter-spacing:-0.600px;color:#25292e;transform:scaleX(0.9070);transform-origin:0 0;">CLIENT</div>
<div class="t" style="left:938.75px;top:1328.08px;font:700 19.985px/19.985px 'Liberation Sans';letter-spacing:-0.600px;color:#25292e;transform:scaleX(0.8193);transform-origin:0 0;">SERVER</div>
<div class="t" style="left:1517.00px;top:1328.08px;font:700 19.985px/19.985px 'Liberation Sans';letter-spacing:-0.600px;color:#25292e;transform:scaleX(0.9256);transform-origin:0 0;">VOLUME</div>
<div class="t" style="left:1743.75px;top:1328.08px;font:700 19.985px/19.985px 'Liberation Sans';letter-spacing:-0.600px;color:#25292e;transform:scaleX(0.9287);transform-origin:0 0;">VOLUME</div>
<div class="t" style="left:2051.09px;top:1328.08px;font:700 19.985px/19.985px 'Liberation Sans';letter-spacing:-0.600px;color:#25292e;transform:scaleX(0.9094);transform-origin:0 0;">RETRANSMITS</div>
<div class="t" style="left:2250.62px;top:1327.58px;font:700 19.985px/19.985px 'Liberation Sans';letter-spacing:-0.600px;color:#25292e;transform:scaleX(0.8817);transform-origin:0 0;">LATENCY</div>
<div class="t" style="left:2438.12px;top:1327.58px;font:700 19.985px/19.985px 'Liberation Sans';letter-spacing:-0.600px;color:#25292e;transform:scaleX(0.8787);transform-origin:0 0;">RTT</div>
<div class="t" style="left:2545.08px;top:1327.58px;font:700 19.985px/19.985px 'Liberation Sans';letter-spacing:-0.600px;color:#25292e;transform:scaleX(0.9219);transform-origin:0 0;">EST. CONNS. / S</div>
<div class="t" style="left:1518.58px;top:1284.66px;font:400 21.076px/21.076px 'Liberation Sans';letter-spacing:-0.632px;color:#62666c;transform:scaleX(0.9242);transform-origin:0 0;">CLIENT</div>
<div class="t" style="left:1621.25px;top:1284.66px;font:400 21.076px/21.076px 'Liberation Sans';letter-spacing:-0.632px;color:#62666c;transform:scaleX(0.8237);transform-origin:0 0;">SERVER</div>
<div class="t" style="left:1776.25px;top:1284.66px;font:400 21.076px/21.076px 'Liberation Sans';letter-spacing:-0.632px;color:#62666c;transform:scaleX(0.8146);transform-origin:0 0;">SERVER</div>
<div class="t" style="left:1879.07px;top:1284.66px;font:400 21.076px/21.076px 'Liberation Sans';letter-spacing:-0.632px;color:#62666c;transform:scaleX(0.9348);transform-origin:0 0;">CLIENT</div>
<div class="t" style="left:2324.00px;top:1283.41px;font:400 21.076px/21.076px 'Liberation Sans';letter-spacing:-0.632px;color:#62666c;transform:scaleX(0.8289);transform-origin:0 0;">TCP</div>
<div class="t" style="left:512.00px;top:1373.54px;font:400 21.802px/21.802px 'Liberation Sans';letter-spacing:-0.346px;color:#25292e;">sentiment-analyser</div>
<div class="t" style="left:975.00px;top:1373.54px;font:400 21.802px/21.802px 'Liberation Sans';letter-spacing:-0.654px;color:#25292e;transform:scaleX(0.9903);transform-origin:0 0;">slow-kafka</div>
<div class="t" style="left:1487.00px;top:1374.16px;font:700 21.076px/21.076px 'Liberation Sans';letter-spacing:-0.593px;color:#25292e;">93.7</div>
<div class="t" style="left:1531.25px;top:1376.62px;font:400 18.169px/18.169px 'Liberation Sans';letter-spacing:-0.545px;color:#62666c;transform:scaleX(0.8504);transform-origin:0 0;">GB</div>
<div class="t" style="left:1566.00px;top:1374.16px;font:400 21.076px/21.076px 'Liberation Sans';letter-spacing:0.000px;color:#25292e;">/</div>
<div class="t" style="left:1585.75px;top:1374.16px;font:700 21.076px/21.076px 'Liberation Sans';letter-spacing:-0.632px;color:#25292e;transform:scaleX(0.9900);transform-origin:0 0;">26.0</div>
<div class="t" style="left:1629.00px;top:1376.62px;font:400 18.169px/18.169px 'Liberation Sans';letter-spacing:-0.093px;color:#62666c;">MB/s</div>
<div class="t" style="left:1743.75px;top:1374.16px;font:700 21.076px/21.076px 'Liberation Sans';letter-spacing:-0.510px;color:#25292e;">25.6</div>
<div class="t" style="left:1787.27px;top:1376.62px;font:400 18.169px/18.169px 'Liberation Sans';letter-spacing:-0.545px;color:#62666c;transform:scaleX(0.9774);transform-origin:0 0;">MB</div>
<div class="t" style="left:1827.00px;top:1374.16px;font:400 21.076px/21.076px 'Liberation Sans';letter-spacing:0.000px;color:#25292e;">/</div>
<div class="t" style="left:1846.25px;top:1374.16px;font:700 21.076px/21.076px 'Liberation Sans';letter-spacing:-0.632px;color:#25292e;transform:scaleX(0.9965);transform-origin:0 0;">7.12</div>
<div class="t" style="left:1889.00px;top:1376.62px;font:400 18.169px/18.169px 'Liberation Sans';letter-spacing:-0.545px;color:#62666c;transform:scaleX(0.9964);transform-origin:0 0;">KB/s</div>
<div class="t" style="left:2166.50px;top:1373.41px;font:700 21.076px/21.076px 'Liberation Sans';letter-spacing:0.000px;color:#25292e;">0</div>
<div class="t" style="left:2261.50px;top:1373.41px;font:700 21.076px/21.076px 'Liberation Sans';letter-spacing:-0.632px;color:#25292e;transform:scaleX(0.9712);transform-origin:0 0;">3.05</div>
<div class="t" style="left:2305.00px;top:1375.87px;font:400 18.169px/18.169px 'Liberation Sans';letter-spacing:-0.124px;color:#62666c;">ms</div>
<div class="t" style="left:2403.50px;top:1373.41px;font:700 21.076px/21.076px 'Liberation Sans';letter-spacing:-0.632px;color:#25292e;transform:scaleX(0.9900);transform-origin:0 0;">6.09</div>
<div class="t" style="left:2446.75px;top:1375.87px;font:400 18.169px/18.169px 'Liberation Sans';letter-spacing:0.126px;color:#62666c;">ms</div>
<div class="t" style="left:2602.25px;top:1373.41px;font:700 21.076px/21.076px 'Liberation Sans';letter-spacing:0.000px;color:#25292e;">0</div>
<div class="t" style="left:2618.50px;top:1375.87px;font:400 18.169px/18.169px 'Liberation Sans';letter-spacing:-0.124px;color:#62666c;">conns/s</div>
<div class="t" style="left:1256.00px;top:739.04px;font:400 21.802px/21.802px 'Liberation Sans';letter-spacing:-0.654px;color:#25292e;transform:scaleX(0.9690);transform-origin:0 0;">TCP Retransmits</div>
<div class="t" style="left:1998.91px;top:739.04px;font:400 21.802px/21.802px 'Liberation Sans';letter-spacing:-0.654px;color:#25292e;transform:scaleX(0.8449);transform-origin:0 0;">RTT</div>
<div class="t" style="left:539.45px;top:834.12px;font:400 16.279px/16.279px 'Liberation Sans';letter-spacing:0.000px;color:#3b3f44;">96</div>
<div class="t" style="left:539.45px;top:874.92px;font:400 16.279px/16.279px 'Liberation Sans';letter-spacing:0.000px;color:#3b3f44;">80</div>
<div class="t" style="left:539.45px;top:915.67px;font:400 16.279px/16.279px 'Liberation Sans';letter-spacing:0.000px;color:#3b3f44;">64</div>
<div class="t" style="left:539.45px;top:956.42px;font:400 16.279px/16.279px 'Liberation Sans';letter-spacing:0.000px;color:#3b3f44;">48</div>
<div class="t" style="left:539.45px;top:997.02px;font:400 16.279px/16.279px 'Liberation Sans';letter-spacing:0.000px;color:#3b3f44;">32</div>
<div class="t" style="left:539.45px;top:1037.52px;font:400 16.279px/16.279px 'Liberation Sans';letter-spacing:0.000px;color:#3b3f44;">16</div>
<div class="t" style="left:548.50px;top:1078.17px;font:400 16.279px/16.279px 'Liberation Sans';letter-spacing:0.000px;color:#3b3f44;">0</div>
<div class="t" style="left:1273.16px;top:794.32px;font:400 16.279px/16.279px 'Liberation Sans';letter-spacing:0.000px;color:#3b3f44;">80k</div>
<div class="t" style="left:1273.16px;top:865.12px;font:400 16.279px/16.279px 'Liberation Sans';letter-spacing:0.000px;color:#3b3f44;">60k</div>
<div class="t" style="left:1273.16px;top:936.02px;font:400 16.279px/16.279px 'Liberation Sans';letter-spacing:0.000px;color:#3b3f44;">40k</div>
<div class="t" style="left:1273.16px;top:1007.02px;font:400 16.279px/16.279px 'Liberation Sans';letter-spacing:0.000px;color:#3b3f44;">20k</div>
<div class="t" style="left:1282.20px;top:1077.92px;font:400 16.279px/16.279px 'Liberation Sans';letter-spacing:0.000px;color:#3b3f44;">0k</div>
<div class="t" style="left:2015.71px;top:793.82px;font:400 16.279px/16.279px 'Liberation Sans';letter-spacing:0.000px;color:#3b3f44;">100</div>
<div class="t" style="left:2024.75px;top:850.72px;font:400 16.279px/16.279px 'Liberation Sans';letter-spacing:0.000px;color:#3b3f44;">80</div>
<div class="t" style="left:2024.75px;top:907.62px;font:400 16.279px/16.279px 'Liberation Sans';letter-spacing:0.000px;color:#3b3f44;">60</div>
<div class="t" style="left:2024.75px;top:964.42px;font:400 16.279px/16.279px 'Liberation Sans';letter-spacing:0.000px;color:#3b3f44;">40</div>
<div class="t" style="left:2024.75px;top:1021.32px;font:400 16.279px/16.279px 'Liberation Sans';letter-spacing:0.000px;color:#3b3f44;">20</div>
<div class="t" style="left:2033.80px;top:1078.22px;font:400 16.279px/16.279px 'Liberation Sans';letter-spacing:0.000px;color:#3b3f44;">0</div>
<div class="t" style="left:623.43px;top:1096.08px;font:400 14.971px/14.971px 'Liberation Sans';letter-spacing:0.000px;color:#3b3f44;">15:00</div>
<div class="t" style="left:783.43px;top:1096.08px;font:400 14.971px/14.971px 'Liberation Sans';letter-spacing:0.000px;color:#3b3f44;">15:15</div>
<div class="t" style="left:944.18px;top:1096.08px;font:400 14.971px/14.971px 'Liberation Sans';letter-spacing:0.000px;color:#3b3f44;">15:30</div>
<div class="t" style="left:1105.43px;top:1096.08px;font:400 14.971px/14.971px 'Liberation Sans';letter-spacing:0.000px;color:#3b3f44;">15:45</div>
<div class="t" style="left:1365.68px;top:1096.08px;font:400 14.971px/14.971px 'Liberation Sans';letter-spacing:0.000px;color:#3b3f44;">15:00</div>
<div class="t" style="left:1526.68px;top:1096.08px;font:400 14.971px/14.971px 'Liberation Sans';letter-spacing:0.000px;color:#3b3f44;">15:15</div>
<div class="t" style="left:1687.43px;top:1096.08px;font:400 14.971px/14.971px 'Liberation Sans';letter-spacing:0.000px;color:#3b3f44;">15:30</div>
<div class="t" style="left:1848.43px;top:1096.08px;font:400 14.971px/14.971px 'Liberation Sans';letter-spacing:0.000px;color:#3b3f44;">15:45</div>
<div class="t" style="left:2108.53px;top:1096.08px;font:400 14.971px/14.971px 'Liberation Sans';letter-spacing:0.000px;color:#3b3f44;">15:00</div>
<div class="t" style="left:2269.43px;top:1096.08px;font:400 14.971px/14.971px 'Liberation Sans';letter-spacing:0.000px;color:#3b3f44;">15:15</div>
<div class="t" style="left:2429.93px;top:1096.08px;font:400 14.971px/14.971px 'Liberation Sans';letter-spacing:0.000px;color:#3b3f44;">15:30</div>
<div class="t" style="left:2591.23px;top:1096.08px;font:400 14.971px/14.971px 'Liberation Sans';letter-spacing:0.000px;color:#3b3f44;">15:45</div>
<div class="t" style="left:572.75px;top:1136.40px;font:400 18.314px/18.314px 'Liberation Sans';letter-spacing:-0.113px;color:#2c3035;">network.client.a...</div>
<div class="t" style="left:766.00px;top:1136.40px;font:400 18.314px/18.314px 'Liberation Sans';letter-spacing:-0.113px;color:#2c3035;">network.client.a...</div>
<div class="t" style="left:959.00px;top:1136.40px;font:400 18.314px/18.314px 'Liberation Sans';letter-spacing:-0.113px;color:#2c3035;">network.client.a...</div>
<div class="t" style="left:1315.50px;top:1136.40px;font:400 18.314px/18.314px 'Liberation Sans';letter-spacing:-0.113px;color:#2c3035;">network.client.a...</div>
<div class="t" style="left:1509.00px;top:1136.40px;font:400 18.314px/18.314px 'Liberation Sans';letter-spacing:-0.113px;color:#2c3035;">network.client.a...</div>
<div class="t" style="left:1701.75px;top:1136.40px;font:400 18.314px/18.314px 'Liberation Sans';letter-spacing:-0.113px;color:#2c3035;">network.client.a...</div>
<div class="t" style="left:2058.00px;top:1136.40px;font:400 18.314px/18.314px 'Liberation Sans';letter-spacing:-0.113px;color:#2c3035;">network.client.a...</div>
<div class="t" style="left:2251.00px;top:1136.40px;font:400 18.314px/18.314px 'Liberation Sans';letter-spacing:-0.113px;color:#2c3035;">network.client.a...</div>
<div class="t" style="left:2443.75px;top:1136.40px;font:400 18.314px/18.314px 'Liberation Sans';letter-spacing:-0.113px;color:#2c3035;">network.client.a...</div>
<div class="t" style="left:1134.00px;top:1135.24px;font:400 17.442px/17.442px 'Liberation Sans';letter-spacing:-0.523px;color:#3b3f44;transform:scaleX(0.9880);transform-origin:0 0;">+97</div>
<div class="t" style="left:1876.00px;top:1135.24px;font:400 17.442px/17.442px 'Liberation Sans';letter-spacing:-0.523px;color:#3b3f44;transform:scaleX(0.9880);transform-origin:0 0;">+97</div>
<div class="t" style="left:2619.00px;top:1135.24px;font:400 17.442px/17.442px 'Liberation Sans';letter-spacing:-0.523px;color:#3b3f44;transform:scaleX(0.9880);transform-origin:0 0;">+51</div>
</body></html>
